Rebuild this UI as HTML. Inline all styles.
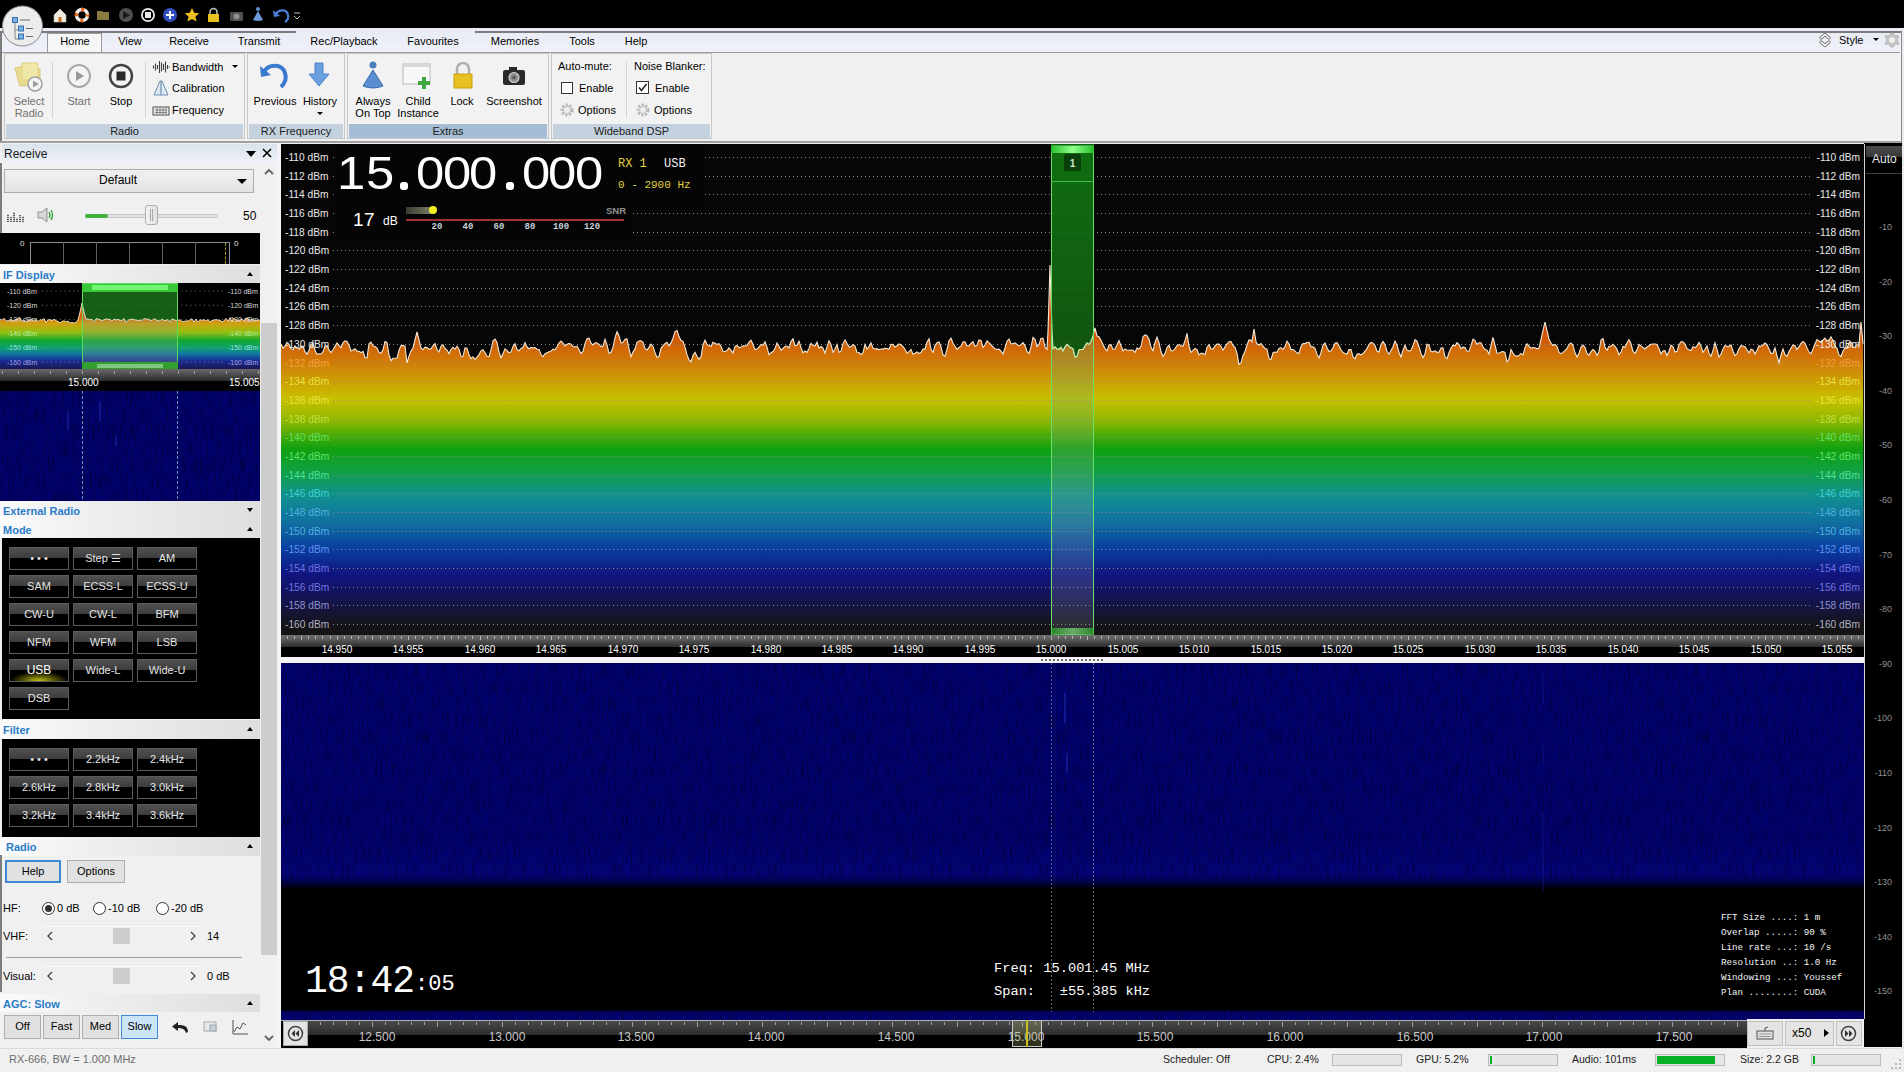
<!DOCTYPE html><html><head><meta charset="utf-8"><style>
*{margin:0;padding:0;box-sizing:border-box}
body{width:1904px;height:1072px;overflow:hidden;background:#f0f0f0;font-family:"Liberation Sans",sans-serif;font-size:12px;color:#000;position:relative}
.ab{position:absolute}
.t{position:absolute;white-space:nowrap;line-height:1}
.btn{position:absolute;background:linear-gradient(#505050,#3c3c3c 48%,#000 48%,#000);border:1px solid #5c5c5c;color:#e4e4e4;font-size:12px;text-align:center;line-height:20px}
.hdr{position:absolute;left:0;width:260px;background:linear-gradient(90deg,#fbfbfb,#f0f0f0 30%,#dedede);color:#2a78c0;font-weight:bold;font-size:12px}
.wbtn{position:absolute;background:#e1e1e1;border:1px solid #adadad;text-align:center;font-size:12px;line-height:20px}
</style></head><body>

<div class="ab" style="left:0;top:0;width:1904px;height:28px;background:#000"></div>
<div class="ab" style="left:0;top:28px;width:1904px;height:24px;background:linear-gradient(#e8eaf4,#f0f2fa)"></div>
<div class="ab" style="left:0;top:31px;width:296px;height:2px;background:#7c7c7c"></div>
<div class="ab" style="left:475px;top:31px;width:1429px;height:2px;background:#7c7c7c"></div>
<div class="ab" style="left:0;top:31px;width:2px;height:110px;background:#7c7c7c;z-index:5"></div>
<div class="ab" style="left:0;top:163px;width:2px;height:70px;background:#7c7c7c;z-index:5"></div>
<div class="ab" style="left:0;top:855px;width:2px;height:137px;background:#7c7c7c;z-index:5"></div>
<div class="ab" style="left:47px;top:33px;width:55px;height:21px;background:#f6f6f6;border:1px solid #9a9a9a;border-bottom:none"></div>
<div class="t" style="left:15px;width:120px;text-align:center;top:36px;font-size:11px">Home</div>
<div class="t" style="left:70px;width:120px;text-align:center;top:36px;font-size:11px">View</div>
<div class="t" style="left:129px;width:120px;text-align:center;top:36px;font-size:11px">Receive</div>
<div class="t" style="left:199px;width:120px;text-align:center;top:36px;font-size:11px">Transmit</div>
<div class="t" style="left:284px;width:120px;text-align:center;top:36px;font-size:11px">Rec/Playback</div>
<div class="t" style="left:373px;width:120px;text-align:center;top:36px;font-size:11px">Favourites</div>
<div class="t" style="left:455px;width:120px;text-align:center;top:36px;font-size:11px">Memories</div>
<div class="t" style="left:522px;width:120px;text-align:center;top:36px;font-size:11px">Tools</div>
<div class="t" style="left:576px;width:120px;text-align:center;top:36px;font-size:11px">Help</div>
<div class="ab" style="left:2px;top:52px;width:1898px;height:89px;background:#f0f0f0;border-top:1px solid #9a9a9a"></div>
<div class="ab" style="left:0;top:141px;width:1904px;height:2px;background:#a0a0a0"></div>
<div class="ab" style="left:4px;top:53px;width:241px;height:86px;border:1px solid #c8c8c8;background:#f2f2f2"></div>
<div class="ab" style="left:6px;top:124px;width:237px;height:14px;background:#c4d2e0"></div>
<div class="t" style="left:4px;width:241px;text-align:center;top:126px;font-size:11px;color:#202020">Radio</div>
<div class="ab" style="left:247px;top:53px;width:98px;height:86px;border:1px solid #c8c8c8;background:#f2f2f2"></div>
<div class="ab" style="left:249px;top:124px;width:94px;height:14px;background:#c4d2e0"></div>
<div class="t" style="left:247px;width:98px;text-align:center;top:126px;font-size:11px;color:#202020">RX Frequency</div>
<div class="ab" style="left:347px;top:53px;width:202px;height:86px;border:1px solid #c8c8c8;background:#f2f2f2"></div>
<div class="ab" style="left:349px;top:124px;width:198px;height:14px;background:#a6bdd6"></div>
<div class="t" style="left:347px;width:202px;text-align:center;top:126px;font-size:11px;color:#202020">Extras</div>
<div class="ab" style="left:551px;top:53px;width:161px;height:86px;border:1px solid #c8c8c8;background:#f2f2f2"></div>
<div class="ab" style="left:553px;top:124px;width:157px;height:14px;background:#c4d2e0"></div>
<div class="t" style="left:551px;width:161px;text-align:center;top:126px;font-size:11px;color:#202020">Wideband DSP</div>
<svg class="ab" style="left:12px;top:60px" width="34" height="34" viewBox="0 0 34 34">
<path d="M3 8 L14 6 L16 9 L28 9 L28 24 L8 26 Z" fill="#e8dc90" stroke="#d8c870" stroke-width="1"/>
<path d="M10 3 L26 3 L26 20 L10 20 Z" fill="#f0e8a8" stroke="#dcd080"/>
<circle cx="23" cy="24" r="7" fill="#f4f4f4" stroke="#a0a0a0" stroke-width="1.5"/>
<path d="M21 20.5 L27 24 L21 27.5 Z" fill="#a0a0a0"/></svg>
<div class="t" style="left:-1px;width:60px;text-align:center;top:96px;font-size:11px;color:#707070;">Select</div>
<div class="t" style="left:-1px;width:60px;text-align:center;top:108px;font-size:11px;color:#707070;">Radio</div>
<div class="ab" style="left:52px;top:62px;width:1px;height:56px;background:#d4d4d4"></div>
<svg class="ab" style="left:65px;top:62px" width="28" height="28" viewBox="0 0 28 28">
<circle cx="14" cy="14" r="11" fill="#f4f4f4" stroke="#a8a8a8" stroke-width="2"/>
<path d="M11 9 L19 14 L11 19 Z" fill="#9a9a9a"/></svg>
<div class="t" style="left:49px;width:60px;text-align:center;top:96px;font-size:11px;color:#707070;">Start</div>
<svg class="ab" style="left:107px;top:62px" width="28" height="28" viewBox="0 0 28 28">
<circle cx="14" cy="14" r="11" fill="#f4f4f4" stroke="#444" stroke-width="2.5"/>
<rect x="9.5" y="9.5" width="9" height="9" fill="#2a2a2a"/></svg>
<div class="t" style="left:91px;width:60px;text-align:center;top:96px;font-size:11px;color:#000;">Stop</div>
<div class="ab" style="left:145px;top:62px;width:1px;height:56px;background:#d4d4d4"></div>
<svg class="ab" style="left:152px;top:60px" width="18" height="14" viewBox="0 0 18 14">
<path d="M1.5 5.5v3M3.5 3.5v7M5.5 5v4M7.5 1v12M9.5 2.5v9M11.5 4v6M13.5 1.5v11M15.5 5v4M17 6.5v1" stroke="#404040" stroke-width="1.1"/></svg>
<div class="t" style="left:172px;top:62px;font-size:11px;color:#000;">Bandwidth</div>
<div class="ab" style="left:232px;top:65px;width:0;height:0;border-left:3px solid transparent;border-right:3px solid transparent;border-top:3px solid #000"></div>
<svg class="ab" style="left:152px;top:80px" width="18" height="16" viewBox="0 0 18 16">
<path d="M8 1 L2 15 L16 15 L10 1 Z" fill="#dce8f4" stroke="#7090b0" stroke-width="1"/><path d="M9 1 V15" stroke="#6080a0"/></svg>
<div class="t" style="left:172px;top:83px;font-size:11px;color:#000;">Calibration</div>
<svg class="ab" style="left:152px;top:104px" width="18" height="12" viewBox="0 0 18 12">
<rect x="1" y="3" width="16" height="8" fill="#e8e8e8" stroke="#505050"/><path d="M3 6h12M3 8.5h12M5 4v6M8 4v6M11 4v6M14 4v6" stroke="#707070" stroke-width="0.8"/></svg>
<div class="t" style="left:172px;top:105px;font-size:11px;color:#000;">Frequency</div>
<svg class="ab" style="left:258px;top:60px" width="32" height="30" viewBox="0 0 32 30">
<path d="M6 12 C10 4 24 3 27 13 C29 19 26 24 23 27" fill="none" stroke="#3a7ad0" stroke-width="4"/>
<path d="M2 6 L3 17 L13 15 Z" fill="#3a7ad0"/></svg>
<div class="t" style="left:245px;width:60px;text-align:center;top:96px;font-size:11px;color:#000;">Previous</div>
<svg class="ab" style="left:307px;top:62px" width="24" height="28" viewBox="0 0 24 28">
<path d="M8 1 H16 V12 H22 L12 24 L2 12 H8 Z" fill="#6aa0e0" stroke="#4a80c8" stroke-width="1"/></svg>
<div class="t" style="left:290px;width:60px;text-align:center;top:96px;font-size:11px;color:#000;">History</div>
<div class="ab" style="left:317px;top:112px;width:0;height:0;border-left:3px solid transparent;border-right:3px solid transparent;border-top:3px solid #000"></div>
<svg class="ab" style="left:358px;top:61px" width="30" height="30" viewBox="0 0 30 30">
<circle cx="15" cy="4" r="3.5" fill="#4a80c0"/>
<path d="M15 9 L25 25 Q15 29 5 25 Z" fill="#5a8ed0" stroke="#3a6aa8" stroke-width="1"/></svg>
<div class="t" style="left:343px;width:60px;text-align:center;top:96px;font-size:11px;color:#000;">Always</div>
<div class="t" style="left:343px;width:60px;text-align:center;top:108px;font-size:11px;color:#000;">On Top</div>
<svg class="ab" style="left:402px;top:63px" width="32" height="28" viewBox="0 0 32 28">
<rect x="1" y="1" width="27" height="20" fill="#f8f8f8" stroke="#b8b8b8"/><rect x="1" y="1" width="27" height="3" fill="#d8d8d8"/>
<path d="M22 14 V26 M16 20 H28" stroke="#40a840" stroke-width="4"/></svg>
<div class="t" style="left:388px;width:60px;text-align:center;top:96px;font-size:11px;color:#000;">Child</div>
<div class="t" style="left:388px;width:60px;text-align:center;top:108px;font-size:11px;color:#000;">Instance</div>
<svg class="ab" style="left:451px;top:62px" width="24" height="28" viewBox="0 0 24 28">
<path d="M6 12 V7 A6 6 0 0 1 18 7 V12" fill="none" stroke="#b0b0b0" stroke-width="2.5"/>
<rect x="3" y="12" width="18" height="14" fill="#e8c020" stroke="#c8a010"/></svg>
<div class="t" style="left:432px;width:60px;text-align:center;top:96px;font-size:11px;color:#000;">Lock</div>
<svg class="ab" style="left:501px;top:65px" width="26" height="22" viewBox="0 0 26 22">
<rect x="2" y="5" width="22" height="15" rx="2" fill="#2a2a2a"/><rect x="8" y="2" width="8" height="4" fill="#2a2a2a"/>
<circle cx="13" cy="12.5" r="5" fill="#909090" stroke="#d0d0d0" stroke-width="1.2"/><circle cx="13" cy="12.5" r="2" fill="#606060"/></svg>
<div class="t" style="left:474px;width:80px;text-align:center;top:96px;font-size:11px;color:#000;">Screenshot</div>
<div class="t" style="left:558px;top:61px;font-size:11px;color:#000;">Auto-mute:</div>
<div class="ab" style="left:561px;top:82px;width:12px;height:12px;border:1px solid #333;background:#fff"></div>
<div class="t" style="left:579px;top:83px;font-size:11px;color:#000;">Enable</div>
<svg class="ab" style="left:559px;top:102px" width="16" height="16" viewBox="0 0 16 16">
<circle cx="8" cy="8" r="5" fill="none" stroke="#b8b8b8" stroke-width="3" stroke-dasharray="2.2 1.4"/><circle cx="8" cy="8" r="3.5" fill="#f0f0f0" stroke="#c0c0c0"/></svg>
<div class="t" style="left:578px;top:105px;font-size:11px;color:#000;">Options</div>
<div class="ab" style="left:626px;top:62px;width:1px;height:56px;background:#d4d4d4"></div>
<div class="t" style="left:634px;top:61px;font-size:11px;color:#000;">Noise Blanker:</div>
<svg class="ab" style="left:636px;top:81px" width="14" height="14" viewBox="0 0 14 14">
<rect x="0.5" y="0.5" width="12" height="12" fill="#fff" stroke="#333"/><path d="M3 6.5 L5.5 9.5 L10.5 3" fill="none" stroke="#222" stroke-width="1.5"/></svg>
<div class="t" style="left:655px;top:83px;font-size:11px;color:#000;">Enable</div>
<svg class="ab" style="left:635px;top:102px" width="16" height="16" viewBox="0 0 16 16">
<circle cx="8" cy="8" r="5" fill="none" stroke="#b8b8b8" stroke-width="3" stroke-dasharray="2.2 1.4"/><circle cx="8" cy="8" r="3.5" fill="#f0f0f0" stroke="#c0c0c0"/></svg>
<div class="t" style="left:654px;top:105px;font-size:11px;color:#000;">Options</div>
<svg class="ab" style="left:1818px;top:32px" width="14" height="16" viewBox="0 0 14 16">
<path d="M3 6 L7 2.5 L11 6 M3 10 L7 13.5 L11 10" fill="none" stroke="#707070" stroke-width="3.2" stroke-linecap="round" stroke-linejoin="round"/>
<path d="M3 6 L7 2.5 L11 6 M3 10 L7 13.5 L11 10" fill="none" stroke="#fff" stroke-width="1.6" stroke-linecap="round" stroke-linejoin="round"/></svg>
<div class="t" style="left:1839px;top:35px;font-size:11px;color:#000;">Style</div>
<div class="ab" style="left:1873px;top:38px;width:0;height:0;border-left:3px solid transparent;border-right:3px solid transparent;border-top:3px solid #000"></div>
<svg class="ab" style="left:1884px;top:32px" width="16" height="16" viewBox="0 0 16 16">
<path d="M6.5 1 H9.5 L10 3 L12 4 L13.8 3 L15 5.5 L13.5 7 V9 L15 10.5 L13.8 13 L12 12 L10 13 L9.5 15 H6.5 L6 13 L4 12 L2.2 13 L1 10.5 L2.5 9 V7 L1 5.5 L2.2 3 L4 4 L6 3 Z" fill="#c4c4c4" stroke="#a8a8a8" stroke-width="0.6"/>
<circle cx="8" cy="8" r="3" fill="#eeeeee"/></svg>
<div class="ab" style="left:1901px;top:31px;width:1px;height:112px;background:#8a8a8a;z-index:4"></div>
<div class="ab" style="left:1902px;top:28px;width:2px;height:1044px;background:#ececec;z-index:4"></div>
<svg class="ab" style="left:0;top:4px" width="46" height="44" viewBox="0 0 46 44">
<circle cx="22.5" cy="22" r="20" fill="#ececec" stroke="#8a8a8a" stroke-width="1"/>
<path d="M15 17 V35 H20 M15 26 H20" fill="none" stroke="#707070" stroke-width="0.8"/>
<rect x="12.5" y="13.5" width="5" height="5" fill="#7ab0e0" stroke="#3a70b0"/>
<rect x="18.5" y="22" width="5" height="5" fill="#7ab0e0" stroke="#3a70b0"/>
<rect x="18.5" y="30" width="5" height="5" fill="#7ab0e0" stroke="#3a70b0"/>
<path d="M20 16 H30 M26 24.5 H33 M26 32.5 H33" stroke="#505050" stroke-width="0.8"/></svg>
<svg class="ab" style="left:52px;top:6px" width="260" height="18" viewBox="0 0 260 18">
<path d="M2 9 L8 3 L14 9 V16 H2 Z" fill="#f0ece0" stroke="#d0c8b0" stroke-width="0.6"/><rect x="6.5" y="11" width="3" height="5" fill="#c87020"/>
<circle cx="30" cy="9" r="5.5" fill="none" stroke="#f4f0ec" stroke-width="3.5"/><circle cx="30" cy="9" r="5.5" fill="none" stroke="#e86a20" stroke-width="3.5" stroke-dasharray="3.2 5.44" stroke-dashoffset="1.6"/>
<path d="M45 5 H50 L51 6 H57 V14 H45 Z" fill="#8a7a40"/>
<circle cx="74" cy="9" r="7" fill="#505050"/><path d="M71 5 L78 9 L71 13 Z" fill="#1a1a1a"/>
<circle cx="96" cy="9" r="7" fill="#e8e8e8"/><circle cx="96" cy="9" r="5.2" fill="#000"/><rect x="93" y="6" width="6" height="6" fill="#e8e8e8"/>
<circle cx="118" cy="9" r="7" fill="#3050c0"/><path d="M118 5 V13 M114 9 H122" stroke="#fff" stroke-width="2"/>
<path d="M140 2 L142.2 6.8 L147.3 7.2 L143.4 10.5 L144.6 15.6 L140 12.9 L135.4 15.6 L136.6 10.5 L132.7 7.2 L137.8 6.8 Z" fill="#f0c020"/>
<path d="M158 8 V6 A3.5 3.5 0 0 1 165 6 V8" fill="none" stroke="#c0c0c0" stroke-width="1.5"/><rect x="156" y="8" width="11" height="8" fill="#e8c020"/>
<rect x="178" y="6" width="13" height="9" rx="1" fill="#505050"/><circle cx="184.5" cy="10.5" r="3" fill="#909090"/>
<circle cx="206" cy="3" r="2" fill="#6090c8"/><path d="M206 5 L211 14 Q206 16 201 14 Z" fill="#6a9ad8"/>
<path d="M224 8 C227 3 235 3 236 9 C237 12 235 15 233 16" fill="none" stroke="#4a80d8" stroke-width="2.2"/><path d="M221 4 L222 11 L228 10 Z" fill="#4a80d8"/>
<path d="M242 10 L245 13 L248 10 M242 7 H248" fill="none" stroke="#c0c0c0" stroke-width="1"/>
</svg>
<div class="ab" style="left:0px;top:143px;width:281px;height:905px;background:#f0f0f0"></div>
<div class="ab" style="left:2px;top:144px;width:275px;height:19px;background:linear-gradient(#dae2ec,#eef2f7)"></div>
<div class="t" style="left:4px;top:148px;font-size:12px;color:#1a1a1a;">Receive</div>
<div class="ab" style="left:246px;top:151px;width:0;height:0;border-left:5px solid transparent;border-right:5px solid transparent;border-top:6px solid #000"></div>
<svg class="ab" style="left:262px;top:148px" width="10" height="10" viewBox="0 0 10 10"><path d="M1 1 L9 9 M9 1 L1 9" stroke="#000" stroke-width="1.6"/></svg>
<div class="ab" style="left:261px;top:163px;width:16px;height:884px;background:#f0f0f0"></div>
<div class="ab" style="left:277px;top:143px;width:4px;height:905px;background:#f4f4f8"></div>
<div class="ab" style="left:261px;top:323px;width:16px;height:632px;background:#cdcdcd"></div>
<svg class="ab" style="left:263px;top:168px" width="12" height="8" viewBox="0 0 12 8"><path d="M2 6 L6 2 L10 6" fill="none" stroke="#606060" stroke-width="1.8"/></svg>
<svg class="ab" style="left:263px;top:1034px" width="12" height="8" viewBox="0 0 12 8"><path d="M2 2 L6 6 L10 2" fill="none" stroke="#606060" stroke-width="1.8"/></svg>
<div class="ab" style="left:4px;top:169px;width:250px;height:24px;border:1px solid #acacac;background:linear-gradient(#f0f0f0,#e4e4e4)"></div>
<div class="t" style="left:68px;width:100px;text-align:center;top:174px;font-size:12px;color:#000;">Default</div>
<div class="ab" style="left:237px;top:179px;width:0;height:0;border-left:5px solid transparent;border-right:5px solid transparent;border-top:5px solid #000"></div>
<svg class="ab" style="left:7px;top:209px" width="18" height="14" viewBox="0 0 18 14">
<path d="M1 13 V5 M4 13 V8 M7 13 V3 M10 13 V9 M13 13 V6 M16 13 V7" stroke="#606060" stroke-width="2" stroke-dasharray="1.2 0.8"/></svg>
<svg class="ab" style="left:36px;top:206px" width="20" height="18" viewBox="0 0 20 18">
<path d="M2 6 H6 L11 2 V16 L6 12 H2 Z" fill="#d8d8d8" stroke="#909090"/><path d="M13 6 Q15 9 13 12 M15 4 Q18 9 15 14" fill="none" stroke="#30a030" stroke-width="1.3"/></svg>
<div class="ab" style="left:85px;top:214px;width:133px;height:4px;border-radius:2px;background:#e0e0e0;border:1px solid #c8c8c8"></div>
<div class="ab" style="left:85px;top:214px;width:23px;height:4px;border-radius:2px;background:#40b040"></div>
<div class="ab" style="left:145px;top:205px;width:13px;height:20px;border-radius:3px;border:1px solid #b0b0b0;background:linear-gradient(90deg,#f4f4f4,#e0e0e0)"></div>
<div class="ab" style="left:150px;top:209px;width:1px;height:12px;background:#a8a8a8"></div><div class="ab" style="left:152px;top:209px;width:1px;height:12px;background:#a8a8a8"></div>
<div class="t" style="left:243px;top:210px;font-size:12px;color:#000;">50</div>
<div class="ab" style="left:0px;top:233px;width:260px;height:31px;background:#000"></div>
<div class="t" style="left:20px;top:240px;font-size:8px;color:#e0e0e0;">0</div>
<div class="t" style="left:234px;top:240px;font-size:8px;color:#e0e0e0;">0</div>
<div class="ab" style="left:30px;top:242px;width:200px;height:22px;border:1px solid #909090;border-bottom:none"></div>
<div class="ab" style="left:63px;top:242px;width:1px;height:22px;background:#606060"></div>
<div class="ab" style="left:96px;top:242px;width:1px;height:22px;background:#606060"></div>
<div class="ab" style="left:129px;top:242px;width:1px;height:22px;background:#606060"></div>
<div class="ab" style="left:162px;top:242px;width:1px;height:22px;background:#606060"></div>
<div class="ab" style="left:195px;top:242px;width:1px;height:22px;background:#606060"></div>
<div class="ab" style="left:225px;top:243px;width:1px;height:21px;border-left:1px dashed #a09020"></div>
<div class="hdr" style="top:265px;height:18px;left:0px;width:260px"></div>
<div class="t" style="left:3px;top:270px;font-size:11px;color:#2a7cc8;font-weight:bold">IF Display</div>
<div class="ab" style="left:247px;top:272px;width:0;height:0;border-left:3px solid transparent;border-right:3px solid transparent;border-bottom:4px solid #000"></div>
<svg class="ab" style="left:0px;top:283px" width="260" height="86" viewBox="0 0 260 86">
<defs><linearGradient id="gif" gradientUnits="userSpaceOnUse" x1="0" y1="34" x2="0" y2="86"><stop offset="0" stop-color="#d86010"/><stop offset="0.12" stop-color="#d0a010"/><stop offset="0.3" stop-color="#90c010"/><stop offset="0.45" stop-color="#10a830"/><stop offset="0.6" stop-color="#10a070"/><stop offset="0.72" stop-color="#1070a0"/><stop offset="0.85" stop-color="#1a2890"/><stop offset="1" stop-color="#1a1a50"/></linearGradient>
<clipPath id="ifc"><rect x="82" y="0" width="96" height="86"/></clipPath></defs>
<rect width="260" height="86" fill="#000"/>
<path d="M0 86 L0 36.2 L2 37.2 L4 35.3 L6 37.7 L8 38.1 L10 36.5 L12 37.4 L14 37.3 L16 36.6 L18 36.1 L20 35.0 L22 38.4 L24 37.0 L26 39.5 L28 37.8 L30 37.3 L32 36.3 L34 38.4 L36 36.5 L38 38.6 L40 36.6 L42 37.2 L44 35.5 L46 39.3 L48 36.9 L50 36.6 L52 37.8 L54 36.1 L56 37.8 L58 38.3 L60 40.0 L62 38.5 L64 37.7 L66 38.9 L68 38.0 L70 40.1 L72 39.5 L74 40.0 L76 39.6 L78 36.6 L80 29.0 L82 20.0 L84 29.0 L86 36.2 L88 36.0 L90 36.8 L92 36.3 L94 38.9 L96 35.8 L98 35.9 L100 36.7 L102 37.7 L104 36.7 L106 36.0 L108 36.2 L110 36.6 L112 38.0 L114 36.0 L116 36.9 L118 36.4 L120 37.3 L122 37.4 L124 35.5 L126 39.4 L128 37.2 L130 36.5 L132 36.1 L134 36.7 L136 37.0 L138 37.6 L140 37.0 L142 37.5 L144 35.4 L146 36.2 L148 36.0 L150 37.2 L152 37.5 L154 35.5 L156 36.8 L158 37.7 L160 37.9 L162 35.9 L164 37.6 L166 37.3 L168 36.6 L170 39.0 L172 35.9 L174 36.7 L176 37.5 L178 37.2 L180 36.8 L182 38.4 L184 38.4 L186 37.9 L188 38.0 L190 36.9 L192 35.8 L194 39.2 L196 36.0 L198 39.2 L200 36.9 L202 37.2 L204 36.8 L206 38.0 L208 36.5 L210 38.8 L212 37.5 L214 37.2 L216 36.4 L218 37.3 L220 37.0 L222 38.9 L224 37.9 L226 35.4 L228 38.5 L230 34.6 L232 38.5 L234 35.1 L236 37.0 L238 37.8 L240 37.0 L242 35.9 L244 38.2 L246 35.2 L248 35.5 L250 38.4 L252 36.1 L254 37.2 L256 37.8 L258 36.9 L260 37.3 L260 86 Z" fill="url(#gif)"/>

<path d="M42 8.0 H224" stroke="#909090" stroke-width="0.8" stroke-dasharray="1 3.5"/>
<text x="7" y="10.5" font-size="7" fill="#d8d8d8" font-family="Liberation Sans">-110 dBm</text>
<text x="228" y="10.5" font-size="7" fill="#d8d8d8" font-family="Liberation Sans">-110 dBm</text>
<path d="M42 22.2 H224" stroke="#909090" stroke-width="0.8" stroke-dasharray="1 3.5"/>
<text x="7" y="24.7" font-size="7" fill="#d8d8d8" font-family="Liberation Sans">-120 dBm</text>
<text x="228" y="24.7" font-size="7" fill="#d8d8d8" font-family="Liberation Sans">-120 dBm</text>
<path d="M42 36.4 H224" stroke="#909090" stroke-width="0.8" stroke-dasharray="1 3.5"/>
<text x="7" y="38.9" font-size="7" fill="#d8d8d8" font-family="Liberation Sans">-130 dBm</text>
<text x="228" y="38.9" font-size="7" fill="#d8d8d8" font-family="Liberation Sans">-130 dBm</text>
<path d="M42 50.6 H224" stroke="#909090" stroke-width="0.8" stroke-dasharray="1 3.5"/>
<text x="7" y="53.1" font-size="7" fill="#b0f0a0" font-family="Liberation Sans">-140 dBm</text>
<text x="228" y="53.1" font-size="7" fill="#b0f0a0" font-family="Liberation Sans">-140 dBm</text>
<path d="M42 64.8 H224" stroke="#909090" stroke-width="0.8" stroke-dasharray="1 3.5"/>
<text x="7" y="67.3" font-size="7" fill="#90e0e0" font-family="Liberation Sans">-150 dBm</text>
<text x="228" y="67.3" font-size="7" fill="#90e0e0" font-family="Liberation Sans">-150 dBm</text>
<path d="M42 79.0 H224" stroke="#909090" stroke-width="0.8" stroke-dasharray="1 3.5"/>
<text x="7" y="81.5" font-size="7" fill="#a0a0e0" font-family="Liberation Sans">-160 dBm</text>
<text x="228" y="81.5" font-size="7" fill="#a0a0e0" font-family="Liberation Sans">-160 dBm</text>
<rect x="82" y="0" width="96" height="86" fill="rgba(130,150,130,0.25)"/>
<path d="M0 0 L0 36.2 L2 37.2 L4 35.3 L6 37.7 L8 38.1 L10 36.5 L12 37.4 L14 37.3 L16 36.6 L18 36.1 L20 35.0 L22 38.4 L24 37.0 L26 39.5 L28 37.8 L30 37.3 L32 36.3 L34 38.4 L36 36.5 L38 38.6 L40 36.6 L42 37.2 L44 35.5 L46 39.3 L48 36.9 L50 36.6 L52 37.8 L54 36.1 L56 37.8 L58 38.3 L60 40.0 L62 38.5 L64 37.7 L66 38.9 L68 38.0 L70 40.1 L72 39.5 L74 40.0 L76 39.6 L78 36.6 L80 29.0 L82 20.0 L84 29.0 L86 36.2 L88 36.0 L90 36.8 L92 36.3 L94 38.9 L96 35.8 L98 35.9 L100 36.7 L102 37.7 L104 36.7 L106 36.0 L108 36.2 L110 36.6 L112 38.0 L114 36.0 L116 36.9 L118 36.4 L120 37.3 L122 37.4 L124 35.5 L126 39.4 L128 37.2 L130 36.5 L132 36.1 L134 36.7 L136 37.0 L138 37.6 L140 37.0 L142 37.5 L144 35.4 L146 36.2 L148 36.0 L150 37.2 L152 37.5 L154 35.5 L156 36.8 L158 37.7 L160 37.9 L162 35.9 L164 37.6 L166 37.3 L168 36.6 L170 39.0 L172 35.9 L174 36.7 L176 37.5 L178 37.2 L180 36.8 L182 38.4 L184 38.4 L186 37.9 L188 38.0 L190 36.9 L192 35.8 L194 39.2 L196 36.0 L198 39.2 L200 36.9 L202 37.2 L204 36.8 L206 38.0 L208 36.5 L210 38.8 L212 37.5 L214 37.2 L216 36.4 L218 37.3 L220 37.0 L222 38.9 L224 37.9 L226 35.4 L228 38.5 L230 34.6 L232 38.5 L234 35.1 L236 37.0 L238 37.8 L240 37.0 L242 35.9 L244 38.2 L246 35.2 L248 35.5 L250 38.4 L252 36.1 L254 37.2 L256 37.8 L258 36.9 L260 37.3 L260 0 Z" fill="rgba(20,120,20,0.7)" clip-path="url(#ifc)"/>
<path d="M0 36.2 L2 37.2 L4 35.3 L6 37.7 L8 38.1 L10 36.5 L12 37.4 L14 37.3 L16 36.6 L18 36.1 L20 35.0 L22 38.4 L24 37.0 L26 39.5 L28 37.8 L30 37.3 L32 36.3 L34 38.4 L36 36.5 L38 38.6 L40 36.6 L42 37.2 L44 35.5 L46 39.3 L48 36.9 L50 36.6 L52 37.8 L54 36.1 L56 37.8 L58 38.3 L60 40.0 L62 38.5 L64 37.7 L66 38.9 L68 38.0 L70 40.1 L72 39.5 L74 40.0 L76 39.6 L78 36.6 L80 29.0 L82 20.0 L84 29.0 L86 36.2 L88 36.0 L90 36.8 L92 36.3 L94 38.9 L96 35.8 L98 35.9 L100 36.7 L102 37.7 L104 36.7 L106 36.0 L108 36.2 L110 36.6 L112 38.0 L114 36.0 L116 36.9 L118 36.4 L120 37.3 L122 37.4 L124 35.5 L126 39.4 L128 37.2 L130 36.5 L132 36.1 L134 36.7 L136 37.0 L138 37.6 L140 37.0 L142 37.5 L144 35.4 L146 36.2 L148 36.0 L150 37.2 L152 37.5 L154 35.5 L156 36.8 L158 37.7 L160 37.9 L162 35.9 L164 37.6 L166 37.3 L168 36.6 L170 39.0 L172 35.9 L174 36.7 L176 37.5 L178 37.2 L180 36.8 L182 38.4 L184 38.4 L186 37.9 L188 38.0 L190 36.9 L192 35.8 L194 39.2 L196 36.0 L198 39.2 L200 36.9 L202 37.2 L204 36.8 L206 38.0 L208 36.5 L210 38.8 L212 37.5 L214 37.2 L216 36.4 L218 37.3 L220 37.0 L222 38.9 L224 37.9 L226 35.4 L228 38.5 L230 34.6 L232 38.5 L234 35.1 L236 37.0 L238 37.8 L240 37.0 L242 35.9 L244 38.2 L246 35.2 L248 35.5 L250 38.4 L252 36.1 L254 37.2 L256 37.8 L258 36.9 L260 37.3" fill="none" stroke="#f0e8d0" stroke-width="0.9"/>
<rect x="82.5" y="0.5" width="95" height="85" fill="none" stroke="#60d860" stroke-width="1"/>
<rect x="82" y="1" width="96" height="8" fill="#38c838"/><rect x="92" y="2" width="76" height="5" fill="#80ff80" opacity="0.8"/>
<rect x="82" y="79" width="96" height="7" fill="#30a030"/><rect x="97" y="81" width="66" height="4" fill="#b0e0b0" opacity="0.6"/>
</svg>
<div class="ab" style="left:0px;top:369px;width:260px;height:12px;background:linear-gradient(#6a6a6a,#2a2a2a)"></div>
<div class="ab" style="left:2px;top:371px;width:1px;height:3px;background:#a0a0a0"></div>
<div class="ab" style="left:18px;top:371px;width:1px;height:3px;background:#a0a0a0"></div>
<div class="ab" style="left:34px;top:371px;width:1px;height:3px;background:#a0a0a0"></div>
<div class="ab" style="left:50px;top:371px;width:1px;height:3px;background:#a0a0a0"></div>
<div class="ab" style="left:66px;top:371px;width:1px;height:3px;background:#a0a0a0"></div>
<div class="ab" style="left:82px;top:371px;width:1px;height:3px;background:#a0a0a0"></div>
<div class="ab" style="left:98px;top:371px;width:1px;height:3px;background:#a0a0a0"></div>
<div class="ab" style="left:114px;top:371px;width:1px;height:3px;background:#a0a0a0"></div>
<div class="ab" style="left:130px;top:371px;width:1px;height:3px;background:#a0a0a0"></div>
<div class="ab" style="left:146px;top:371px;width:1px;height:3px;background:#a0a0a0"></div>
<div class="ab" style="left:162px;top:371px;width:1px;height:3px;background:#a0a0a0"></div>
<div class="ab" style="left:178px;top:371px;width:1px;height:3px;background:#a0a0a0"></div>
<div class="ab" style="left:194px;top:371px;width:1px;height:3px;background:#a0a0a0"></div>
<div class="ab" style="left:210px;top:371px;width:1px;height:3px;background:#a0a0a0"></div>
<div class="ab" style="left:226px;top:371px;width:1px;height:3px;background:#a0a0a0"></div>
<div class="ab" style="left:242px;top:371px;width:1px;height:3px;background:#a0a0a0"></div>
<div class="ab" style="left:258px;top:371px;width:1px;height:3px;background:#a0a0a0"></div>
<div class="ab" style="left:0px;top:381px;width:260px;height:10px;background:#000"></div>
<div class="t" style="left:68px;top:378px;font-size:10px;color:#fff;">15.000</div>
<div class="t" style="left:229px;top:378px;font-size:10px;color:#fff;">15.005</div>
<svg class="ab" style="left:0px;top:391px" width="260" height="110" viewBox="0 0 260 110">
<defs><filter id="wfn2" x="0" y="0" width="100%" height="100%" color-interpolation-filters="sRGB">
<feTurbulence type="fractalNoise" baseFrequency="0.6 0.06" numOctaves="2" seed="2"/>
<feColorMatrix type="matrix" values="0 0 0 0 0  0 0 0 0 0  0 0 0 0 0.12  0 0 0 2.0 -0.85"/></filter></defs>
<rect width="260" height="110" fill="#02026c"/>
<rect width="260" height="110" filter="url(#wfn2)" opacity="0.6"/>
<path d="M68 20 V40 M100 10 V30 M116 45 V55" stroke="#2a3ad0" stroke-width="1" opacity="0.7"/>
<path d="M82.5 0 V110 M177.5 0 V110" stroke="#6a90c0" stroke-width="1" stroke-dasharray="3 2"/>
</svg>
<div class="hdr" style="top:501px;height:19px;left:0px;width:260px"></div>
<div class="t" style="left:3px;top:506px;font-size:11px;color:#2a7cc8;font-weight:bold">External Radio</div>
<div class="ab" style="left:247px;top:508px;width:0;height:0;border-left:3px solid transparent;border-right:3px solid transparent;border-top:4px solid #000"></div>
<div class="hdr" style="top:520px;height:18px;left:0px;width:260px"></div>
<div class="t" style="left:3px;top:525px;font-size:11px;color:#2a7cc8;font-weight:bold">Mode</div>
<div class="ab" style="left:247px;top:527px;width:0;height:0;border-left:3px solid transparent;border-right:3px solid transparent;border-bottom:4px solid #000"></div>
<div class="ab" style="left:2px;top:538px;width:258px;height:181px;background:#000"></div>
<div class="btn" style="left:9px;top:547px;width:60px;height:23px;line-height:21px;font-size:11px">&bull; &bull; &bull;</div>
<div class="btn" style="left:73px;top:547px;width:60px;height:23px;line-height:21px;font-size:11px">Step &#9776;</div>
<div class="btn" style="left:137px;top:547px;width:60px;height:23px;line-height:21px;font-size:11px">AM</div>
<div class="btn" style="left:9px;top:575px;width:60px;height:23px;line-height:21px;font-size:11px">SAM</div>
<div class="btn" style="left:73px;top:575px;width:60px;height:23px;line-height:21px;font-size:11px">ECSS-L</div>
<div class="btn" style="left:137px;top:575px;width:60px;height:23px;line-height:21px;font-size:11px">ECSS-U</div>
<div class="btn" style="left:9px;top:603px;width:60px;height:23px;line-height:21px;font-size:11px">CW-U</div>
<div class="btn" style="left:73px;top:603px;width:60px;height:23px;line-height:21px;font-size:11px">CW-L</div>
<div class="btn" style="left:137px;top:603px;width:60px;height:23px;line-height:21px;font-size:11px">BFM</div>
<div class="btn" style="left:9px;top:631px;width:60px;height:23px;line-height:21px;font-size:11px">NFM</div>
<div class="btn" style="left:73px;top:631px;width:60px;height:23px;line-height:21px;font-size:11px">WFM</div>
<div class="btn" style="left:137px;top:631px;width:60px;height:23px;line-height:21px;font-size:11px">LSB</div>
<div class="btn" style="left:9px;top:659px;width:60px;height:23px;background:radial-gradient(ellipse 50% 45% at 50% 100%,#c4c418 0%,rgba(150,150,10,0.55) 55%,transparent 100%),linear-gradient(#505050,#3c3c3c 48%,#000 48%,#000);color:#fff;line-height:21px;font-size:12px">USB</div>
<div class="btn" style="left:73px;top:659px;width:60px;height:23px;line-height:21px;font-size:11px">Wide-L</div>
<div class="btn" style="left:137px;top:659px;width:60px;height:23px;line-height:21px;font-size:11px">Wide-U</div>
<div class="btn" style="left:9px;top:687px;width:60px;height:23px;line-height:21px;font-size:11px">DSB</div>
<div class="hdr" style="top:720px;height:19px;left:0px;width:260px"></div>
<div class="t" style="left:3px;top:725px;font-size:11px;color:#2a7cc8;font-weight:bold">Filter</div>
<div class="ab" style="left:247px;top:727px;width:0;height:0;border-left:3px solid transparent;border-right:3px solid transparent;border-bottom:4px solid #000"></div>
<div class="ab" style="left:2px;top:739px;width:258px;height:98px;background:#000"></div>
<div class="btn" style="left:9px;top:748px;width:60px;height:23px;line-height:21px;font-size:11px">&bull; &bull; &bull;</div>
<div class="btn" style="left:73px;top:748px;width:60px;height:23px;line-height:21px;font-size:11px">2.2kHz</div>
<div class="btn" style="left:137px;top:748px;width:60px;height:23px;line-height:21px;font-size:11px">2.4kHz</div>
<div class="btn" style="left:9px;top:776px;width:60px;height:23px;line-height:21px;font-size:11px">2.6kHz</div>
<div class="btn" style="left:73px;top:776px;width:60px;height:23px;line-height:21px;font-size:11px">2.8kHz</div>
<div class="btn" style="left:137px;top:776px;width:60px;height:23px;line-height:21px;font-size:11px">3.0kHz</div>
<div class="btn" style="left:9px;top:804px;width:60px;height:23px;line-height:21px;font-size:11px">3.2kHz</div>
<div class="btn" style="left:73px;top:804px;width:60px;height:23px;line-height:21px;font-size:11px">3.4kHz</div>
<div class="btn" style="left:137px;top:804px;width:60px;height:23px;line-height:21px;font-size:11px">3.6kHz</div>
<div class="hdr" style="top:837px;height:19px;left:0px;width:260px"></div>
<div class="t" style="left:6px;top:842px;font-size:11px;color:#2a7cc8;font-weight:bold">Radio</div>
<div class="ab" style="left:247px;top:844px;width:0;height:0;border-left:3px solid transparent;border-right:3px solid transparent;border-bottom:4px solid #000"></div>
<div class="ab" style="left:5px;top:860px;width:56px;height:23px;background:#e1e1e1;border:2px solid #3c8ad8"></div>
<div class="t" style="left:5px;width:56px;text-align:center;top:866px;font-size:11px;color:#000;">Help</div>
<div class="ab" style="left:67px;top:860px;width:58px;height:23px;background:#e1e1e1;border:1px solid #adadad"></div>
<div class="t" style="left:67px;width:58px;text-align:center;top:866px;font-size:11px;color:#000;">Options</div>
<div class="t" style="left:3px;top:903px;font-size:11px;color:#000;">HF:</div>
<div class="ab" style="left:42px;top:902px;width:13px;height:13px;border-radius:50%;border:1px solid #333;background:#fff"></div>
<div class="ab" style="left:45px;top:905px;width:7px;height:7px;border-radius:50%;background:#333"></div>
<div class="t" style="left:57px;top:903px;font-size:11px;color:#000;">0 dB</div>
<div class="ab" style="left:93px;top:902px;width:13px;height:13px;border-radius:50%;border:1px solid #333;background:#fff"></div>
<div class="t" style="left:108px;top:903px;font-size:11px;color:#000;">-10 dB</div>
<div class="ab" style="left:156px;top:902px;width:13px;height:13px;border-radius:50%;border:1px solid #333;background:#fff"></div>
<div class="t" style="left:171px;top:903px;font-size:11px;color:#000;">-20 dB</div>
<div class="t" style="left:3px;top:931px;font-size:11px;color:#000;">VHF:</div>
<div class="ab" style="left:42px;top:926px;width:160px;height:1px;background:#fafafa"></div>
<svg class="ab" style="left:46px;top:931px" width="8" height="10" viewBox="0 0 8 10"><path d="M6 1 L2 5 L6 9" fill="none" stroke="#404040" stroke-width="1.3"/></svg>
<svg class="ab" style="left:189px;top:931px" width="8" height="10" viewBox="0 0 8 10"><path d="M2 1 L6 5 L2 9" fill="none" stroke="#404040" stroke-width="1.3"/></svg>
<div class="ab" style="left:113px;top:928px;width:17px;height:16px;background:#cdcdcd"></div>
<div class="t" style="left:207px;top:931px;font-size:11px;color:#000;">14</div>
<div class="t" style="left:3px;top:971px;font-size:11px;color:#000;">Visual:</div>
<div class="ab" style="left:42px;top:966px;width:160px;height:1px;background:#fafafa"></div>
<svg class="ab" style="left:46px;top:971px" width="8" height="10" viewBox="0 0 8 10"><path d="M6 1 L2 5 L6 9" fill="none" stroke="#404040" stroke-width="1.3"/></svg>
<svg class="ab" style="left:189px;top:971px" width="8" height="10" viewBox="0 0 8 10"><path d="M2 1 L6 5 L2 9" fill="none" stroke="#404040" stroke-width="1.3"/></svg>
<div class="ab" style="left:113px;top:968px;width:17px;height:16px;background:#cdcdcd"></div>
<div class="t" style="left:207px;top:971px;font-size:11px;color:#000;">0 dB</div>
<div class="ab" style="left:6px;top:957px;width:236px;height:1px;background:#a0a0a0"></div>
<div class="hdr" style="top:994px;height:18px;left:0px;width:260px"></div>
<div class="t" style="left:3px;top:999px;font-size:11px;color:#2a7cc8;font-weight:bold">AGC: Slow</div>
<div class="ab" style="left:247px;top:1001px;width:0;height:0;border-left:3px solid transparent;border-right:3px solid transparent;border-bottom:4px solid #000"></div>
<div class="ab" style="left:4px;top:1015px;width:37px;height:24px;background:#e1e1e1;border:1px solid #adadad"></div>
<div class="t" style="left:4px;width:37px;text-align:center;top:1021px;font-size:11px;color:#000;">Off</div>
<div class="ab" style="left:43px;top:1015px;width:37px;height:24px;background:#e1e1e1;border:1px solid #adadad"></div>
<div class="t" style="left:43px;width:37px;text-align:center;top:1021px;font-size:11px;color:#000;">Fast</div>
<div class="ab" style="left:82px;top:1015px;width:37px;height:24px;background:#e1e1e1;border:1px solid #adadad"></div>
<div class="t" style="left:82px;width:37px;text-align:center;top:1021px;font-size:11px;color:#000;">Med</div>
<div class="ab" style="left:121px;top:1015px;width:37px;height:24px;background:#cce4f7;border:1px solid #3c8ad8"></div>
<div class="t" style="left:121px;width:37px;text-align:center;top:1021px;font-size:11px;color:#000;">Slow</div>
<svg class="ab" style="left:170px;top:1018px" width="80" height="18" viewBox="0 0 80 18">
<path d="M18 14 Q18 6 8 7 L8 4 L2 8.5 L8 13 L8 10 Q15 10 16 15" fill="#202020"/>
<rect x="34" y="4" width="12" height="9" fill="#e8e8e8" stroke="#a0a8b0"/><rect x="40" y="7" width="6" height="6" fill="#c8d0d8" stroke="#a0a8b0"/>
<path d="M63 2 V16 H78 M64 14 L67 9 L70 11 L73 5 L76 7" fill="none" stroke="#505050" stroke-width="1"/>
</svg>
<div class="ab" style="left:0;top:1048px;width:1904px;height:24px;background:#f0f0f0;border-top:1px solid #dadada"></div>
<div class="t" style="left:9px;top:1054px;font-size:11px;color:#6d6d6d;">RX-666, BW = 1.000 MHz</div>
<svg class="ab" style="left:281px;top:144px" width="1583" height="491" viewBox="0 0 1583 491" font-family="Liberation Sans">
<defs><linearGradient id="sg" gradientUnits="userSpaceOnUse" x1="0" y1="186" x2="0" y2="491"><stop offset="0" stop-color="#d04c08"/><stop offset="0.098" stop-color="#d07808"/><stop offset="0.226" stop-color="#c8c000"/><stop offset="0.295" stop-color="#90b800"/><stop offset="0.39" stop-color="#10a010"/><stop offset="0.459" stop-color="#10a040"/><stop offset="0.544" stop-color="#109090"/><stop offset="0.63" stop-color="#1070a0"/><stop offset="0.715" stop-color="#0a40a0"/><stop offset="0.8" stop-color="#101580"/><stop offset="0.885" stop-color="#141450"/><stop offset="0.97" stop-color="#141418"/><stop offset="1" stop-color="#141414"/></linearGradient></defs>
<rect width="1583" height="491" fill="#060606"/>
<path d="M0 491 L0 199.9 L2 204.2 L4 202.2 L6 198.4 L8 200.4 L10 204.7 L12 205.7 L14 202.1 L16 203.8 L18 205.2 L20 202.6 L22 202.2 L24 207.7 L26 210.2 L28 206.2 L30 200.6 L32 199.1 L34 206.3 L36 210.3 L38 209.7 L40 210.0 L42 207.7 L44 202.4 L46 201.6 L48 205.9 L50 208.5 L52 205.8 L54 202.4 L56 199.0 L58 201.4 L60 203.7 L62 198.8 L64 196.8 L66 197.4 L68 201.3 L70 207.0 L72 206.0 L74 204.8 L76 207.1 L78 207.2 L80 208.6 L82 207.3 L84 213.5 L86 213.8 L88 199.8 L90 198.2 L92 201.9 L94 202.5 L96 204.0 L98 208.5 L100 209.0 L102 205.7 L104 197.5 L106 198.7 L108 211.0 L110 216.6 L112 214.3 L114 214.3 L116 214.2 L118 206.2 L120 201.8 L122 201.4 L124 202.2 L126 219.0 L128 212.1 L130 207.1 L132 204.0 L134 196.0 L136 188.0 L138 196.0 L140 204.0 L142 205.8 L144 203.2 L146 203.6 L148 205.1 L150 204.9 L152 201.8 L154 199.6 L156 205.5 L158 208.0 L160 202.4 L162 200.9 L164 204.5 L166 206.2 L168 209.6 L170 205.5 L172 203.2 L174 205.2 L176 202.3 L178 205.2 L180 212.2 L182 212.5 L184 203.8 L186 204.2 L188 210.7 L190 214.6 L192 212.9 L194 215.5 L196 213.2 L198 210.6 L200 206.8 L202 205.7 L204 208.7 L206 212.2 L208 212.7 L210 205.8 L212 196.8 L214 195.0 L216 198.4 L218 208.2 L220 213.8 L222 209.6 L224 204.9 L226 206.3 L228 208.8 L230 207.9 L232 202.6 L234 199.7 L236 205.6 L238 206.8 L240 204.5 L242 203.5 L244 198.7 L246 203.0 L248 205.0 L250 203.3 L252 204.1 L254 203.5 L256 205.2 L258 205.5 L260 210.5 L262 212.7 L264 209.7 L266 208.7 L268 207.7 L270 207.1 L272 205.2 L274 205.9 L276 202.8 L278 199.1 L280 197.0 L282 199.2 L284 202.0 L286 200.4 L288 199.3 L290 200.1 L292 202.5 L294 202.9 L296 202.1 L298 205.7 L300 209.5 L302 207.5 L304 199.6 L306 194.8 L308 194.1 L310 199.2 L312 201.0 L314 198.8 L316 199.0 L318 200.4 L320 202.6 L322 202.1 L324 195.3 L326 200.9 L328 209.4 L330 208.3 L332 203.2 L334 193.9 L336 187.7 L338 191.7 L340 198.8 L342 198.5 L344 195.3 L346 194.9 L348 204.9 L350 212.8 L352 208.1 L354 204.9 L356 198.4 L358 197.0 L360 196.8 L362 198.4 L364 204.6 L366 205.9 L368 203.4 L370 200.2 L372 202.5 L374 208.6 L376 213.4 L378 212.5 L380 204.3 L382 201.7 L384 199.6 L386 198.2 L388 201.9 L390 198.9 L392 194.2 L394 187.6 L396 186.5 L398 192.6 L400 196.5 L402 197.3 L404 203.1 L406 210.7 L408 215.7 L410 217.7 L412 211.3 L414 208.4 L416 212.2 L418 215.2 L420 212.7 L422 200.8 L424 196.2 L426 200.4 L428 201.6 L430 202.6 L432 198.3 L434 199.2 L436 200.5 L438 199.6 L440 202.2 L442 207.2 L444 207.5 L446 206.6 L448 203.9 L450 206.2 L452 209.0 L454 202.3 L456 201.5 L458 203.6 L460 202.9 L462 201.7 L464 202.0 L466 201.2 L468 198.4 L470 196.2 L472 200.5 L474 205.6 L476 205.1 L478 203.1 L480 200.5 L482 201.3 L484 197.7 L486 203.2 L488 210.7 L490 208.8 L492 207.5 L494 204.6 L496 199.0 L498 202.3 L500 206.1 L502 204.5 L504 202.5 L506 202.0 L508 203.9 L510 197.5 L512 194.8 L514 201.8 L516 201.1 L518 197.1 L520 203.6 L522 208.8 L524 207.0 L526 208.5 L528 204.4 L530 199.2 L532 201.5 L534 201.8 L536 198.2 L538 204.0 L540 202.5 L542 204.2 L544 209.1 L546 202.9 L548 196.8 L550 200.6 L552 208.4 L554 204.9 L556 200.7 L558 208.3 L560 207.2 L562 199.6 L564 195.8 L566 199.5 L568 202.9 L570 202.8 L572 200.6 L574 202.1 L576 208.2 L578 208.5 L580 210.7 L582 208.7 L584 200.4 L586 205.0 L588 202.6 L590 198.8 L592 204.1 L594 205.0 L596 204.6 L598 205.8 L600 205.1 L602 205.1 L604 204.2 L606 204.5 L608 205.2 L610 200.3 L612 200.5 L614 203.0 L616 201.8 L618 199.9 L620 200.8 L622 202.7 L624 205.3 L626 209.1 L628 207.7 L630 205.6 L632 210.3 L634 209.3 L636 207.9 L638 209.5 L640 208.6 L642 205.0 L644 205.1 L646 198.1 L648 194.7 L650 205.4 L652 208.4 L654 201.6 L656 198.7 L658 197.9 L660 202.7 L662 210.8 L664 212.1 L666 205.3 L668 196.7 L670 194.2 L672 199.3 L674 202.3 L676 205.3 L678 203.5 L680 202.2 L682 198.0 L684 197.8 L686 201.9 L688 201.8 L690 199.5 L692 197.7 L694 202.4 L696 201.1 L698 196.0 L700 196.5 L702 203.3 L704 201.0 L706 196.9 L708 198.6 L710 200.7 L712 203.0 L714 204.8 L716 205.5 L718 205.2 L720 207.2 L722 210.0 L724 204.0 L726 197.2 L728 195.0 L730 199.8 L732 199.8 L734 198.9 L736 200.4 L738 201.9 L740 200.6 L742 198.6 L744 201.6 L746 207.5 L748 209.4 L750 203.1 L752 193.4 L754 195.4 L756 202.6 L758 200.5 L760 194.2 L762 194.2 L764 203.1 L766 205.4 L767 187.4 L768 154.2 L769 121.0 L770 154.2 L771 187.4 L772 204.6 L774 202.8 L776 204.9 L778 205.4 L780 203.1 L782 206.7 L784 202.7 L786 200.2 L788 202.1 L790 203.8 L792 204.7 L794 213.0 L796 212.3 L798 205.8 L800 205.5 L802 205.3 L804 201.8 L806 199.1 L808 200.3 L810 197.5 L812 192.0 L814 184.0 L816 192.0 L818 192.9 L820 196.3 L822 200.4 L824 204.6 L826 206.9 L828 201.0 L830 200.6 L832 205.4 L834 205.1 L836 200.7 L838 196.6 L840 201.8 L842 207.0 L844 204.9 L846 206.3 L848 206.2 L850 206.0 L852 206.2 L854 208.4 L856 204.1 L858 205.1 L860 202.3 L862 192.7 L864 190.9 L866 191.8 L868 195.2 L870 203.4 L872 206.8 L874 198.5 L876 193.1 L878 198.6 L880 207.8 L882 212.4 L884 209.6 L886 203.6 L888 201.4 L890 206.8 L892 206.8 L894 204.6 L896 201.6 L898 200.6 L900 201.7 L902 202.3 L904 196.8 L906 189.3 L908 202.1 L910 208.5 L912 206.3 L914 204.4 L916 205.7 L918 210.9 L920 209.2 L922 209.4 L924 210.7 L926 203.5 L928 200.5 L930 204.7 L932 205.1 L934 201.9 L936 200.1 L938 200.0 L940 202.6 L942 206.2 L944 202.9 L946 199.9 L948 197.7 L950 197.6 L952 201.5 L954 203.4 L956 209.4 L958 220.4 L960 218.8 L962 211.4 L964 207.6 L966 201.0 L968 195.9 L970 196.2 L971 197.7 L972 191.3 L973 185.0 L974 191.3 L975 197.7 L976 199.8 L978 201.0 L980 199.5 L982 202.1 L984 204.6 L986 205.1 L988 214.4 L990 215.6 L992 208.8 L994 208.1 L996 208.2 L998 204.5 L1000 203.6 L1002 205.6 L1004 202.6 L1006 197.1 L1008 200.0 L1010 205.6 L1012 205.5 L1014 207.1 L1016 208.8 L1018 209.5 L1020 202.8 L1022 199.5 L1024 199.6 L1026 198.5 L1028 198.3 L1030 202.7 L1032 202.9 L1034 204.3 L1036 210.2 L1038 213.9 L1040 208.5 L1042 201.2 L1044 199.1 L1046 203.7 L1048 207.6 L1050 206.7 L1052 203.8 L1054 199.2 L1056 198.6 L1058 201.7 L1060 205.7 L1062 208.6 L1064 209.5 L1066 210.0 L1068 205.6 L1070 205.6 L1072 212.8 L1074 214.7 L1076 210.2 L1078 209.7 L1080 210.9 L1082 209.5 L1084 207.1 L1086 204.6 L1088 200.5 L1090 198.4 L1092 199.1 L1094 201.6 L1096 207.3 L1098 208.0 L1100 200.5 L1102 197.6 L1104 200.6 L1106 207.4 L1108 210.2 L1110 206.4 L1112 202.7 L1114 197.1 L1116 201.3 L1118 208.2 L1120 213.0 L1122 206.3 L1124 201.3 L1126 206.2 L1128 207.1 L1130 206.2 L1132 201.7 L1134 195.7 L1136 197.2 L1138 202.7 L1140 209.4 L1142 213.8 L1144 209.7 L1146 200.3 L1148 201.2 L1150 207.3 L1152 207.9 L1154 206.6 L1156 208.4 L1158 208.2 L1160 204.0 L1162 203.9 L1164 212.9 L1166 214.6 L1168 208.7 L1170 204.1 L1172 201.2 L1174 201.8 L1176 198.7 L1178 200.7 L1180 204.7 L1182 203.2 L1184 203.6 L1186 207.3 L1188 207.3 L1190 201.7 L1192 195.1 L1194 196.5 L1196 200.5 L1198 198.8 L1200 198.7 L1202 203.0 L1204 205.5 L1206 206.2 L1208 210.0 L1210 201.6 L1212 193.4 L1214 201.1 L1216 209.2 L1218 209.0 L1220 208.0 L1222 207.6 L1224 208.4 L1226 218.0 L1228 215.1 L1230 205.5 L1232 209.0 L1234 211.8 L1236 212.1 L1238 211.6 L1240 209.4 L1242 210.9 L1244 203.8 L1246 199.7 L1248 202.1 L1250 204.3 L1252 203.6 L1254 203.7 L1256 204.8 L1258 204.0 L1260 195.3 L1262 186.7 L1264 178.0 L1266 186.7 L1268 195.3 L1270 199.0 L1272 201.5 L1274 200.4 L1276 202.6 L1278 208.5 L1280 209.7 L1282 208.4 L1284 206.6 L1286 204.4 L1288 200.3 L1290 198.9 L1292 201.6 L1294 208.8 L1296 213.0 L1298 209.3 L1300 203.1 L1302 201.1 L1304 203.3 L1306 209.5 L1308 211.1 L1310 207.7 L1312 205.6 L1314 207.3 L1316 211.5 L1318 207.4 L1320 196.0 L1322 194.5 L1324 203.4 L1326 206.1 L1328 202.3 L1330 202.1 L1332 200.2 L1334 202.4 L1336 205.2 L1338 210.6 L1340 208.2 L1342 202.4 L1344 203.0 L1346 198.9 L1348 195.7 L1350 199.8 L1352 207.5 L1354 209.3 L1356 205.9 L1358 200.3 L1360 201.9 L1362 203.4 L1364 205.0 L1366 203.0 L1368 201.7 L1370 200.2 L1372 200.0 L1374 200.0 L1376 200.4 L1378 204.8 L1380 210.0 L1382 206.9 L1384 206.7 L1386 211.6 L1388 207.2 L1390 201.2 L1392 202.8 L1394 208.0 L1396 207.3 L1398 200.8 L1400 197.7 L1402 197.7 L1404 200.4 L1406 204.4 L1408 206.1 L1410 206.6 L1412 202.7 L1414 203.7 L1416 201.9 L1418 198.4 L1420 202.1 L1422 208.3 L1424 205.2 L1426 201.8 L1428 209.2 L1430 212.2 L1432 206.6 L1434 198.9 L1436 205.5 L1438 213.2 L1440 210.1 L1442 205.1 L1444 201.5 L1446 202.5 L1448 202.4 L1450 201.0 L1452 207.2 L1454 211.6 L1456 209.6 L1458 204.8 L1460 201.6 L1462 202.0 L1464 202.8 L1466 205.7 L1468 208.9 L1470 205.2 L1472 206.0 L1474 210.1 L1476 206.3 L1478 201.7 L1480 202.4 L1482 201.0 L1484 199.0 L1486 200.7 L1488 205.0 L1490 209.4 L1492 209.3 L1494 203.8 L1496 211.6 L1498 218.9 L1500 210.8 L1502 205.0 L1504 210.6 L1506 212.4 L1508 207.6 L1510 204.2 L1512 200.9 L1514 201.7 L1516 205.4 L1518 202.7 L1520 199.3 L1522 197.4 L1524 199.4 L1526 203.9 L1528 208.2 L1530 209.7 L1532 205.1 L1534 199.7 L1536 195.5 L1538 197.0 L1540 198.4 L1542 196.2 L1544 194.1 L1546 197.0 L1548 196.0 L1550 192.8 L1552 196.6 L1554 202.2 L1556 204.3 L1558 210.8 L1560 212.5 L1562 206.9 L1564 203.6 L1566 204.5 L1568 198.6 L1570 198.1 L1572 203.3 L1574 203.1 L1576 200.7 L1578 200.7 L1580 178.0 L1582 199.8 L1583 491 Z" fill="url(#sg)"/>

<path d="M52 13.5 H1532" stroke="#8c8c8c" stroke-width="1" stroke-dasharray="1 3"/>
<text x="4" y="17.0" font-size="10.2" fill="#e8e8e8">-110 dBm</text>
<text x="1579" y="17.0" font-size="10.2" fill="#e8e8e8" text-anchor="end">-110 dBm</text>
<path d="M52 32.5 H1532" stroke="#8c8c8c" stroke-width="1" stroke-dasharray="1 3"/>
<text x="4" y="35.7" font-size="10.2" fill="#e8e8e8">-112 dBm</text>
<text x="1579" y="35.7" font-size="10.2" fill="#e8e8e8" text-anchor="end">-112 dBm</text>
<path d="M52 50.5 H1532" stroke="#8c8c8c" stroke-width="1" stroke-dasharray="1 3"/>
<text x="4" y="54.4" font-size="10.2" fill="#e8e8e8">-114 dBm</text>
<text x="1579" y="54.4" font-size="10.2" fill="#e8e8e8" text-anchor="end">-114 dBm</text>
<path d="M52 69.5 H1532" stroke="#8c8c8c" stroke-width="1" stroke-dasharray="1 3"/>
<text x="4" y="73.0" font-size="10.2" fill="#e8e8e8">-116 dBm</text>
<text x="1579" y="73.0" font-size="10.2" fill="#e8e8e8" text-anchor="end">-116 dBm</text>
<path d="M52 88.5 H1532" stroke="#8c8c8c" stroke-width="1" stroke-dasharray="1 3"/>
<text x="4" y="91.7" font-size="10.2" fill="#e8e8e8">-118 dBm</text>
<text x="1579" y="91.7" font-size="10.2" fill="#e8e8e8" text-anchor="end">-118 dBm</text>
<path d="M52 106.5 H1532" stroke="#8c8c8c" stroke-width="1" stroke-dasharray="1 3"/>
<text x="4" y="110.4" font-size="10.2" fill="#e8e8e8">-120 dBm</text>
<text x="1579" y="110.4" font-size="10.2" fill="#e8e8e8" text-anchor="end">-120 dBm</text>
<path d="M52 125.5 H1532" stroke="#8c8c8c" stroke-width="1" stroke-dasharray="1 3"/>
<text x="4" y="129.1" font-size="10.2" fill="#e8e8e8">-122 dBm</text>
<text x="1579" y="129.1" font-size="10.2" fill="#e8e8e8" text-anchor="end">-122 dBm</text>
<path d="M52 144.5 H1532" stroke="#8c8c8c" stroke-width="1" stroke-dasharray="1 3"/>
<text x="4" y="147.8" font-size="10.2" fill="#e8e8e8">-124 dBm</text>
<text x="1579" y="147.8" font-size="10.2" fill="#e8e8e8" text-anchor="end">-124 dBm</text>
<path d="M52 162.5 H1532" stroke="#8c8c8c" stroke-width="1" stroke-dasharray="1 3"/>
<text x="4" y="166.4" font-size="10.2" fill="#e8e8e8">-126 dBm</text>
<text x="1579" y="166.4" font-size="10.2" fill="#e8e8e8" text-anchor="end">-126 dBm</text>
<path d="M52 181.5 H1532" stroke="#8c8c8c" stroke-width="1" stroke-dasharray="1 3"/>
<text x="4" y="185.1" font-size="10.2" fill="#e8e8e8">-128 dBm</text>
<text x="1579" y="185.1" font-size="10.2" fill="#e8e8e8" text-anchor="end">-128 dBm</text>
<path d="M52 200.5 H1532" stroke="#8c8c8c" stroke-width="1" stroke-dasharray="1 3"/>
<text x="4" y="203.8" font-size="10.2" fill="#e8e8e8">-130 dBm</text>
<text x="1579" y="203.8" font-size="10.2" fill="#e8e8e8" text-anchor="end">-130 dBm</text>
<path d="M52 218.5 H1532" stroke="#8c8c8c" stroke-width="1" stroke-dasharray="1 3"/>
<text x="4" y="222.5" font-size="10.2" fill="#f0a040">-132 dBm</text>
<text x="1579" y="222.5" font-size="10.2" fill="#f0a040" text-anchor="end">-132 dBm</text>
<path d="M52 237.5 H1532" stroke="#8c8c8c" stroke-width="1" stroke-dasharray="1 3"/>
<text x="4" y="241.2" font-size="10.2" fill="#e8e040">-134 dBm</text>
<text x="1579" y="241.2" font-size="10.2" fill="#e8e040" text-anchor="end">-134 dBm</text>
<path d="M52 256.5 H1532" stroke="#8c8c8c" stroke-width="1" stroke-dasharray="1 3"/>
<text x="4" y="259.8" font-size="10.2" fill="#e8e040">-136 dBm</text>
<text x="1579" y="259.8" font-size="10.2" fill="#e8e040" text-anchor="end">-136 dBm</text>
<path d="M52 275.5 H1532" stroke="#8c8c8c" stroke-width="1" stroke-dasharray="1 3"/>
<text x="4" y="278.5" font-size="10.2" fill="#c0e040">-138 dBm</text>
<text x="1579" y="278.5" font-size="10.2" fill="#c0e040" text-anchor="end">-138 dBm</text>
<path d="M52 293.5 H1532" stroke="#8c8c8c" stroke-width="1" stroke-dasharray="1 3"/>
<text x="4" y="297.2" font-size="10.2" fill="#60e060">-140 dBm</text>
<text x="1579" y="297.2" font-size="10.2" fill="#60e060" text-anchor="end">-140 dBm</text>
<path d="M52 312.5 H1532" stroke="#8c8c8c" stroke-width="1" stroke-dasharray="1 3"/>
<text x="4" y="315.9" font-size="10.2" fill="#60e060">-142 dBm</text>
<text x="1579" y="315.9" font-size="10.2" fill="#60e060" text-anchor="end">-142 dBm</text>
<path d="M52 331.5 H1532" stroke="#8c8c8c" stroke-width="1" stroke-dasharray="1 3"/>
<text x="4" y="334.6" font-size="10.2" fill="#50e090">-144 dBm</text>
<text x="1579" y="334.6" font-size="10.2" fill="#50e090" text-anchor="end">-144 dBm</text>
<path d="M52 349.5 H1532" stroke="#8c8c8c" stroke-width="1" stroke-dasharray="1 3"/>
<text x="4" y="353.2" font-size="10.2" fill="#40d0d0">-146 dBm</text>
<text x="1579" y="353.2" font-size="10.2" fill="#40d0d0" text-anchor="end">-146 dBm</text>
<path d="M52 368.5 H1532" stroke="#8c8c8c" stroke-width="1" stroke-dasharray="1 3"/>
<text x="4" y="371.9" font-size="10.2" fill="#50b0e0">-148 dBm</text>
<text x="1579" y="371.9" font-size="10.2" fill="#50b0e0" text-anchor="end">-148 dBm</text>
<path d="M52 387.5 H1532" stroke="#8c8c8c" stroke-width="1" stroke-dasharray="1 3"/>
<text x="4" y="390.6" font-size="10.2" fill="#50b0e0">-150 dBm</text>
<text x="1579" y="390.6" font-size="10.2" fill="#50b0e0" text-anchor="end">-150 dBm</text>
<path d="M52 405.5 H1532" stroke="#8c8c8c" stroke-width="1" stroke-dasharray="1 3"/>
<text x="4" y="409.3" font-size="10.2" fill="#6090f0">-152 dBm</text>
<text x="1579" y="409.3" font-size="10.2" fill="#6090f0" text-anchor="end">-152 dBm</text>
<path d="M52 424.5 H1532" stroke="#8c8c8c" stroke-width="1" stroke-dasharray="1 3"/>
<text x="4" y="428.0" font-size="10.2" fill="#7070e0">-154 dBm</text>
<text x="1579" y="428.0" font-size="10.2" fill="#7070e0" text-anchor="end">-154 dBm</text>
<path d="M52 443.5 H1532" stroke="#8c8c8c" stroke-width="1" stroke-dasharray="1 3"/>
<text x="4" y="446.6" font-size="10.2" fill="#7070e0">-156 dBm</text>
<text x="1579" y="446.6" font-size="10.2" fill="#7070e0" text-anchor="end">-156 dBm</text>
<path d="M52 461.5 H1532" stroke="#8c8c8c" stroke-width="1" stroke-dasharray="1 3"/>
<text x="4" y="465.3" font-size="10.2" fill="#9090d0">-158 dBm</text>
<text x="1579" y="465.3" font-size="10.2" fill="#9090d0" text-anchor="end">-158 dBm</text>
<path d="M52 480.5 H1532" stroke="#8c8c8c" stroke-width="1" stroke-dasharray="1 3"/>
<text x="4" y="484.0" font-size="10.2" fill="#b0b0c0">-160 dBm</text>
<text x="1579" y="484.0" font-size="10.2" fill="#b0b0c0" text-anchor="end">-160 dBm</text>
<path d="M0 199.9 L2 204.2 L4 202.2 L6 198.4 L8 200.4 L10 204.7 L12 205.7 L14 202.1 L16 203.8 L18 205.2 L20 202.6 L22 202.2 L24 207.7 L26 210.2 L28 206.2 L30 200.6 L32 199.1 L34 206.3 L36 210.3 L38 209.7 L40 210.0 L42 207.7 L44 202.4 L46 201.6 L48 205.9 L50 208.5 L52 205.8 L54 202.4 L56 199.0 L58 201.4 L60 203.7 L62 198.8 L64 196.8 L66 197.4 L68 201.3 L70 207.0 L72 206.0 L74 204.8 L76 207.1 L78 207.2 L80 208.6 L82 207.3 L84 213.5 L86 213.8 L88 199.8 L90 198.2 L92 201.9 L94 202.5 L96 204.0 L98 208.5 L100 209.0 L102 205.7 L104 197.5 L106 198.7 L108 211.0 L110 216.6 L112 214.3 L114 214.3 L116 214.2 L118 206.2 L120 201.8 L122 201.4 L124 202.2 L126 219.0 L128 212.1 L130 207.1 L132 204.0 L134 196.0 L136 188.0 L138 196.0 L140 204.0 L142 205.8 L144 203.2 L146 203.6 L148 205.1 L150 204.9 L152 201.8 L154 199.6 L156 205.5 L158 208.0 L160 202.4 L162 200.9 L164 204.5 L166 206.2 L168 209.6 L170 205.5 L172 203.2 L174 205.2 L176 202.3 L178 205.2 L180 212.2 L182 212.5 L184 203.8 L186 204.2 L188 210.7 L190 214.6 L192 212.9 L194 215.5 L196 213.2 L198 210.6 L200 206.8 L202 205.7 L204 208.7 L206 212.2 L208 212.7 L210 205.8 L212 196.8 L214 195.0 L216 198.4 L218 208.2 L220 213.8 L222 209.6 L224 204.9 L226 206.3 L228 208.8 L230 207.9 L232 202.6 L234 199.7 L236 205.6 L238 206.8 L240 204.5 L242 203.5 L244 198.7 L246 203.0 L248 205.0 L250 203.3 L252 204.1 L254 203.5 L256 205.2 L258 205.5 L260 210.5 L262 212.7 L264 209.7 L266 208.7 L268 207.7 L270 207.1 L272 205.2 L274 205.9 L276 202.8 L278 199.1 L280 197.0 L282 199.2 L284 202.0 L286 200.4 L288 199.3 L290 200.1 L292 202.5 L294 202.9 L296 202.1 L298 205.7 L300 209.5 L302 207.5 L304 199.6 L306 194.8 L308 194.1 L310 199.2 L312 201.0 L314 198.8 L316 199.0 L318 200.4 L320 202.6 L322 202.1 L324 195.3 L326 200.9 L328 209.4 L330 208.3 L332 203.2 L334 193.9 L336 187.7 L338 191.7 L340 198.8 L342 198.5 L344 195.3 L346 194.9 L348 204.9 L350 212.8 L352 208.1 L354 204.9 L356 198.4 L358 197.0 L360 196.8 L362 198.4 L364 204.6 L366 205.9 L368 203.4 L370 200.2 L372 202.5 L374 208.6 L376 213.4 L378 212.5 L380 204.3 L382 201.7 L384 199.6 L386 198.2 L388 201.9 L390 198.9 L392 194.2 L394 187.6 L396 186.5 L398 192.6 L400 196.5 L402 197.3 L404 203.1 L406 210.7 L408 215.7 L410 217.7 L412 211.3 L414 208.4 L416 212.2 L418 215.2 L420 212.7 L422 200.8 L424 196.2 L426 200.4 L428 201.6 L430 202.6 L432 198.3 L434 199.2 L436 200.5 L438 199.6 L440 202.2 L442 207.2 L444 207.5 L446 206.6 L448 203.9 L450 206.2 L452 209.0 L454 202.3 L456 201.5 L458 203.6 L460 202.9 L462 201.7 L464 202.0 L466 201.2 L468 198.4 L470 196.2 L472 200.5 L474 205.6 L476 205.1 L478 203.1 L480 200.5 L482 201.3 L484 197.7 L486 203.2 L488 210.7 L490 208.8 L492 207.5 L494 204.6 L496 199.0 L498 202.3 L500 206.1 L502 204.5 L504 202.5 L506 202.0 L508 203.9 L510 197.5 L512 194.8 L514 201.8 L516 201.1 L518 197.1 L520 203.6 L522 208.8 L524 207.0 L526 208.5 L528 204.4 L530 199.2 L532 201.5 L534 201.8 L536 198.2 L538 204.0 L540 202.5 L542 204.2 L544 209.1 L546 202.9 L548 196.8 L550 200.6 L552 208.4 L554 204.9 L556 200.7 L558 208.3 L560 207.2 L562 199.6 L564 195.8 L566 199.5 L568 202.9 L570 202.8 L572 200.6 L574 202.1 L576 208.2 L578 208.5 L580 210.7 L582 208.7 L584 200.4 L586 205.0 L588 202.6 L590 198.8 L592 204.1 L594 205.0 L596 204.6 L598 205.8 L600 205.1 L602 205.1 L604 204.2 L606 204.5 L608 205.2 L610 200.3 L612 200.5 L614 203.0 L616 201.8 L618 199.9 L620 200.8 L622 202.7 L624 205.3 L626 209.1 L628 207.7 L630 205.6 L632 210.3 L634 209.3 L636 207.9 L638 209.5 L640 208.6 L642 205.0 L644 205.1 L646 198.1 L648 194.7 L650 205.4 L652 208.4 L654 201.6 L656 198.7 L658 197.9 L660 202.7 L662 210.8 L664 212.1 L666 205.3 L668 196.7 L670 194.2 L672 199.3 L674 202.3 L676 205.3 L678 203.5 L680 202.2 L682 198.0 L684 197.8 L686 201.9 L688 201.8 L690 199.5 L692 197.7 L694 202.4 L696 201.1 L698 196.0 L700 196.5 L702 203.3 L704 201.0 L706 196.9 L708 198.6 L710 200.7 L712 203.0 L714 204.8 L716 205.5 L718 205.2 L720 207.2 L722 210.0 L724 204.0 L726 197.2 L728 195.0 L730 199.8 L732 199.8 L734 198.9 L736 200.4 L738 201.9 L740 200.6 L742 198.6 L744 201.6 L746 207.5 L748 209.4 L750 203.1 L752 193.4 L754 195.4 L756 202.6 L758 200.5 L760 194.2 L762 194.2 L764 203.1 L766 205.4 L767 187.4 L768 154.2 L769 121.0 L770 154.2 L771 187.4 L772 204.6 L774 202.8 L776 204.9 L778 205.4 L780 203.1 L782 206.7 L784 202.7 L786 200.2 L788 202.1 L790 203.8 L792 204.7 L794 213.0 L796 212.3 L798 205.8 L800 205.5 L802 205.3 L804 201.8 L806 199.1 L808 200.3 L810 197.5 L812 192.0 L814 184.0 L816 192.0 L818 192.9 L820 196.3 L822 200.4 L824 204.6 L826 206.9 L828 201.0 L830 200.6 L832 205.4 L834 205.1 L836 200.7 L838 196.6 L840 201.8 L842 207.0 L844 204.9 L846 206.3 L848 206.2 L850 206.0 L852 206.2 L854 208.4 L856 204.1 L858 205.1 L860 202.3 L862 192.7 L864 190.9 L866 191.8 L868 195.2 L870 203.4 L872 206.8 L874 198.5 L876 193.1 L878 198.6 L880 207.8 L882 212.4 L884 209.6 L886 203.6 L888 201.4 L890 206.8 L892 206.8 L894 204.6 L896 201.6 L898 200.6 L900 201.7 L902 202.3 L904 196.8 L906 189.3 L908 202.1 L910 208.5 L912 206.3 L914 204.4 L916 205.7 L918 210.9 L920 209.2 L922 209.4 L924 210.7 L926 203.5 L928 200.5 L930 204.7 L932 205.1 L934 201.9 L936 200.1 L938 200.0 L940 202.6 L942 206.2 L944 202.9 L946 199.9 L948 197.7 L950 197.6 L952 201.5 L954 203.4 L956 209.4 L958 220.4 L960 218.8 L962 211.4 L964 207.6 L966 201.0 L968 195.9 L970 196.2 L971 197.7 L972 191.3 L973 185.0 L974 191.3 L975 197.7 L976 199.8 L978 201.0 L980 199.5 L982 202.1 L984 204.6 L986 205.1 L988 214.4 L990 215.6 L992 208.8 L994 208.1 L996 208.2 L998 204.5 L1000 203.6 L1002 205.6 L1004 202.6 L1006 197.1 L1008 200.0 L1010 205.6 L1012 205.5 L1014 207.1 L1016 208.8 L1018 209.5 L1020 202.8 L1022 199.5 L1024 199.6 L1026 198.5 L1028 198.3 L1030 202.7 L1032 202.9 L1034 204.3 L1036 210.2 L1038 213.9 L1040 208.5 L1042 201.2 L1044 199.1 L1046 203.7 L1048 207.6 L1050 206.7 L1052 203.8 L1054 199.2 L1056 198.6 L1058 201.7 L1060 205.7 L1062 208.6 L1064 209.5 L1066 210.0 L1068 205.6 L1070 205.6 L1072 212.8 L1074 214.7 L1076 210.2 L1078 209.7 L1080 210.9 L1082 209.5 L1084 207.1 L1086 204.6 L1088 200.5 L1090 198.4 L1092 199.1 L1094 201.6 L1096 207.3 L1098 208.0 L1100 200.5 L1102 197.6 L1104 200.6 L1106 207.4 L1108 210.2 L1110 206.4 L1112 202.7 L1114 197.1 L1116 201.3 L1118 208.2 L1120 213.0 L1122 206.3 L1124 201.3 L1126 206.2 L1128 207.1 L1130 206.2 L1132 201.7 L1134 195.7 L1136 197.2 L1138 202.7 L1140 209.4 L1142 213.8 L1144 209.7 L1146 200.3 L1148 201.2 L1150 207.3 L1152 207.9 L1154 206.6 L1156 208.4 L1158 208.2 L1160 204.0 L1162 203.9 L1164 212.9 L1166 214.6 L1168 208.7 L1170 204.1 L1172 201.2 L1174 201.8 L1176 198.7 L1178 200.7 L1180 204.7 L1182 203.2 L1184 203.6 L1186 207.3 L1188 207.3 L1190 201.7 L1192 195.1 L1194 196.5 L1196 200.5 L1198 198.8 L1200 198.7 L1202 203.0 L1204 205.5 L1206 206.2 L1208 210.0 L1210 201.6 L1212 193.4 L1214 201.1 L1216 209.2 L1218 209.0 L1220 208.0 L1222 207.6 L1224 208.4 L1226 218.0 L1228 215.1 L1230 205.5 L1232 209.0 L1234 211.8 L1236 212.1 L1238 211.6 L1240 209.4 L1242 210.9 L1244 203.8 L1246 199.7 L1248 202.1 L1250 204.3 L1252 203.6 L1254 203.7 L1256 204.8 L1258 204.0 L1260 195.3 L1262 186.7 L1264 178.0 L1266 186.7 L1268 195.3 L1270 199.0 L1272 201.5 L1274 200.4 L1276 202.6 L1278 208.5 L1280 209.7 L1282 208.4 L1284 206.6 L1286 204.4 L1288 200.3 L1290 198.9 L1292 201.6 L1294 208.8 L1296 213.0 L1298 209.3 L1300 203.1 L1302 201.1 L1304 203.3 L1306 209.5 L1308 211.1 L1310 207.7 L1312 205.6 L1314 207.3 L1316 211.5 L1318 207.4 L1320 196.0 L1322 194.5 L1324 203.4 L1326 206.1 L1328 202.3 L1330 202.1 L1332 200.2 L1334 202.4 L1336 205.2 L1338 210.6 L1340 208.2 L1342 202.4 L1344 203.0 L1346 198.9 L1348 195.7 L1350 199.8 L1352 207.5 L1354 209.3 L1356 205.9 L1358 200.3 L1360 201.9 L1362 203.4 L1364 205.0 L1366 203.0 L1368 201.7 L1370 200.2 L1372 200.0 L1374 200.0 L1376 200.4 L1378 204.8 L1380 210.0 L1382 206.9 L1384 206.7 L1386 211.6 L1388 207.2 L1390 201.2 L1392 202.8 L1394 208.0 L1396 207.3 L1398 200.8 L1400 197.7 L1402 197.7 L1404 200.4 L1406 204.4 L1408 206.1 L1410 206.6 L1412 202.7 L1414 203.7 L1416 201.9 L1418 198.4 L1420 202.1 L1422 208.3 L1424 205.2 L1426 201.8 L1428 209.2 L1430 212.2 L1432 206.6 L1434 198.9 L1436 205.5 L1438 213.2 L1440 210.1 L1442 205.1 L1444 201.5 L1446 202.5 L1448 202.4 L1450 201.0 L1452 207.2 L1454 211.6 L1456 209.6 L1458 204.8 L1460 201.6 L1462 202.0 L1464 202.8 L1466 205.7 L1468 208.9 L1470 205.2 L1472 206.0 L1474 210.1 L1476 206.3 L1478 201.7 L1480 202.4 L1482 201.0 L1484 199.0 L1486 200.7 L1488 205.0 L1490 209.4 L1492 209.3 L1494 203.8 L1496 211.6 L1498 218.9 L1500 210.8 L1502 205.0 L1504 210.6 L1506 212.4 L1508 207.6 L1510 204.2 L1512 200.9 L1514 201.7 L1516 205.4 L1518 202.7 L1520 199.3 L1522 197.4 L1524 199.4 L1526 203.9 L1528 208.2 L1530 209.7 L1532 205.1 L1534 199.7 L1536 195.5 L1538 197.0 L1540 198.4 L1542 196.2 L1544 194.1 L1546 197.0 L1548 196.0 L1550 192.8 L1552 196.6 L1554 202.2 L1556 204.3 L1558 210.8 L1560 212.5 L1562 206.9 L1564 203.6 L1566 204.5 L1568 198.6 L1570 198.1 L1572 203.3 L1574 203.1 L1576 200.7 L1578 200.7 L1580 178.0 L1582 199.8" fill="none" stroke="#f4e8d8" stroke-width="1.1"/>
<clipPath id="pbc"><rect x="770" y="0" width="43" height="491"/></clipPath>
<linearGradient id="pbo" x1="0" y1="0" x2="0" y2="1"><stop offset="0" stop-color="rgb(60,200,60)" stop-opacity="0.35"/><stop offset="0.55" stop-color="rgb(110,170,110)" stop-opacity="0.28"/><stop offset="1" stop-color="rgb(170,170,190)" stop-opacity="0.16"/></linearGradient>
<rect x="770" y="2" width="43" height="489" fill="url(#pbo)"/>
<linearGradient id="pbg" x1="0" y1="0" x2="0" y2="1"><stop offset="0" stop-color="rgb(14,118,14)" stop-opacity="0.82"/><stop offset="1" stop-color="rgb(12,90,12)" stop-opacity="0.8"/></linearGradient>
<path d="M0 0 L0 199.9 L2 204.2 L4 202.2 L6 198.4 L8 200.4 L10 204.7 L12 205.7 L14 202.1 L16 203.8 L18 205.2 L20 202.6 L22 202.2 L24 207.7 L26 210.2 L28 206.2 L30 200.6 L32 199.1 L34 206.3 L36 210.3 L38 209.7 L40 210.0 L42 207.7 L44 202.4 L46 201.6 L48 205.9 L50 208.5 L52 205.8 L54 202.4 L56 199.0 L58 201.4 L60 203.7 L62 198.8 L64 196.8 L66 197.4 L68 201.3 L70 207.0 L72 206.0 L74 204.8 L76 207.1 L78 207.2 L80 208.6 L82 207.3 L84 213.5 L86 213.8 L88 199.8 L90 198.2 L92 201.9 L94 202.5 L96 204.0 L98 208.5 L100 209.0 L102 205.7 L104 197.5 L106 198.7 L108 211.0 L110 216.6 L112 214.3 L114 214.3 L116 214.2 L118 206.2 L120 201.8 L122 201.4 L124 202.2 L126 219.0 L128 212.1 L130 207.1 L132 204.0 L134 196.0 L136 188.0 L138 196.0 L140 204.0 L142 205.8 L144 203.2 L146 203.6 L148 205.1 L150 204.9 L152 201.8 L154 199.6 L156 205.5 L158 208.0 L160 202.4 L162 200.9 L164 204.5 L166 206.2 L168 209.6 L170 205.5 L172 203.2 L174 205.2 L176 202.3 L178 205.2 L180 212.2 L182 212.5 L184 203.8 L186 204.2 L188 210.7 L190 214.6 L192 212.9 L194 215.5 L196 213.2 L198 210.6 L200 206.8 L202 205.7 L204 208.7 L206 212.2 L208 212.7 L210 205.8 L212 196.8 L214 195.0 L216 198.4 L218 208.2 L220 213.8 L222 209.6 L224 204.9 L226 206.3 L228 208.8 L230 207.9 L232 202.6 L234 199.7 L236 205.6 L238 206.8 L240 204.5 L242 203.5 L244 198.7 L246 203.0 L248 205.0 L250 203.3 L252 204.1 L254 203.5 L256 205.2 L258 205.5 L260 210.5 L262 212.7 L264 209.7 L266 208.7 L268 207.7 L270 207.1 L272 205.2 L274 205.9 L276 202.8 L278 199.1 L280 197.0 L282 199.2 L284 202.0 L286 200.4 L288 199.3 L290 200.1 L292 202.5 L294 202.9 L296 202.1 L298 205.7 L300 209.5 L302 207.5 L304 199.6 L306 194.8 L308 194.1 L310 199.2 L312 201.0 L314 198.8 L316 199.0 L318 200.4 L320 202.6 L322 202.1 L324 195.3 L326 200.9 L328 209.4 L330 208.3 L332 203.2 L334 193.9 L336 187.7 L338 191.7 L340 198.8 L342 198.5 L344 195.3 L346 194.9 L348 204.9 L350 212.8 L352 208.1 L354 204.9 L356 198.4 L358 197.0 L360 196.8 L362 198.4 L364 204.6 L366 205.9 L368 203.4 L370 200.2 L372 202.5 L374 208.6 L376 213.4 L378 212.5 L380 204.3 L382 201.7 L384 199.6 L386 198.2 L388 201.9 L390 198.9 L392 194.2 L394 187.6 L396 186.5 L398 192.6 L400 196.5 L402 197.3 L404 203.1 L406 210.7 L408 215.7 L410 217.7 L412 211.3 L414 208.4 L416 212.2 L418 215.2 L420 212.7 L422 200.8 L424 196.2 L426 200.4 L428 201.6 L430 202.6 L432 198.3 L434 199.2 L436 200.5 L438 199.6 L440 202.2 L442 207.2 L444 207.5 L446 206.6 L448 203.9 L450 206.2 L452 209.0 L454 202.3 L456 201.5 L458 203.6 L460 202.9 L462 201.7 L464 202.0 L466 201.2 L468 198.4 L470 196.2 L472 200.5 L474 205.6 L476 205.1 L478 203.1 L480 200.5 L482 201.3 L484 197.7 L486 203.2 L488 210.7 L490 208.8 L492 207.5 L494 204.6 L496 199.0 L498 202.3 L500 206.1 L502 204.5 L504 202.5 L506 202.0 L508 203.9 L510 197.5 L512 194.8 L514 201.8 L516 201.1 L518 197.1 L520 203.6 L522 208.8 L524 207.0 L526 208.5 L528 204.4 L530 199.2 L532 201.5 L534 201.8 L536 198.2 L538 204.0 L540 202.5 L542 204.2 L544 209.1 L546 202.9 L548 196.8 L550 200.6 L552 208.4 L554 204.9 L556 200.7 L558 208.3 L560 207.2 L562 199.6 L564 195.8 L566 199.5 L568 202.9 L570 202.8 L572 200.6 L574 202.1 L576 208.2 L578 208.5 L580 210.7 L582 208.7 L584 200.4 L586 205.0 L588 202.6 L590 198.8 L592 204.1 L594 205.0 L596 204.6 L598 205.8 L600 205.1 L602 205.1 L604 204.2 L606 204.5 L608 205.2 L610 200.3 L612 200.5 L614 203.0 L616 201.8 L618 199.9 L620 200.8 L622 202.7 L624 205.3 L626 209.1 L628 207.7 L630 205.6 L632 210.3 L634 209.3 L636 207.9 L638 209.5 L640 208.6 L642 205.0 L644 205.1 L646 198.1 L648 194.7 L650 205.4 L652 208.4 L654 201.6 L656 198.7 L658 197.9 L660 202.7 L662 210.8 L664 212.1 L666 205.3 L668 196.7 L670 194.2 L672 199.3 L674 202.3 L676 205.3 L678 203.5 L680 202.2 L682 198.0 L684 197.8 L686 201.9 L688 201.8 L690 199.5 L692 197.7 L694 202.4 L696 201.1 L698 196.0 L700 196.5 L702 203.3 L704 201.0 L706 196.9 L708 198.6 L710 200.7 L712 203.0 L714 204.8 L716 205.5 L718 205.2 L720 207.2 L722 210.0 L724 204.0 L726 197.2 L728 195.0 L730 199.8 L732 199.8 L734 198.9 L736 200.4 L738 201.9 L740 200.6 L742 198.6 L744 201.6 L746 207.5 L748 209.4 L750 203.1 L752 193.4 L754 195.4 L756 202.6 L758 200.5 L760 194.2 L762 194.2 L764 203.1 L766 205.4 L767 187.4 L768 154.2 L769 121.0 L770 154.2 L771 187.4 L772 204.6 L774 202.8 L776 204.9 L778 205.4 L780 203.1 L782 206.7 L784 202.7 L786 200.2 L788 202.1 L790 203.8 L792 204.7 L794 213.0 L796 212.3 L798 205.8 L800 205.5 L802 205.3 L804 201.8 L806 199.1 L808 200.3 L810 197.5 L812 192.0 L814 184.0 L816 192.0 L818 192.9 L820 196.3 L822 200.4 L824 204.6 L826 206.9 L828 201.0 L830 200.6 L832 205.4 L834 205.1 L836 200.7 L838 196.6 L840 201.8 L842 207.0 L844 204.9 L846 206.3 L848 206.2 L850 206.0 L852 206.2 L854 208.4 L856 204.1 L858 205.1 L860 202.3 L862 192.7 L864 190.9 L866 191.8 L868 195.2 L870 203.4 L872 206.8 L874 198.5 L876 193.1 L878 198.6 L880 207.8 L882 212.4 L884 209.6 L886 203.6 L888 201.4 L890 206.8 L892 206.8 L894 204.6 L896 201.6 L898 200.6 L900 201.7 L902 202.3 L904 196.8 L906 189.3 L908 202.1 L910 208.5 L912 206.3 L914 204.4 L916 205.7 L918 210.9 L920 209.2 L922 209.4 L924 210.7 L926 203.5 L928 200.5 L930 204.7 L932 205.1 L934 201.9 L936 200.1 L938 200.0 L940 202.6 L942 206.2 L944 202.9 L946 199.9 L948 197.7 L950 197.6 L952 201.5 L954 203.4 L956 209.4 L958 220.4 L960 218.8 L962 211.4 L964 207.6 L966 201.0 L968 195.9 L970 196.2 L971 197.7 L972 191.3 L973 185.0 L974 191.3 L975 197.7 L976 199.8 L978 201.0 L980 199.5 L982 202.1 L984 204.6 L986 205.1 L988 214.4 L990 215.6 L992 208.8 L994 208.1 L996 208.2 L998 204.5 L1000 203.6 L1002 205.6 L1004 202.6 L1006 197.1 L1008 200.0 L1010 205.6 L1012 205.5 L1014 207.1 L1016 208.8 L1018 209.5 L1020 202.8 L1022 199.5 L1024 199.6 L1026 198.5 L1028 198.3 L1030 202.7 L1032 202.9 L1034 204.3 L1036 210.2 L1038 213.9 L1040 208.5 L1042 201.2 L1044 199.1 L1046 203.7 L1048 207.6 L1050 206.7 L1052 203.8 L1054 199.2 L1056 198.6 L1058 201.7 L1060 205.7 L1062 208.6 L1064 209.5 L1066 210.0 L1068 205.6 L1070 205.6 L1072 212.8 L1074 214.7 L1076 210.2 L1078 209.7 L1080 210.9 L1082 209.5 L1084 207.1 L1086 204.6 L1088 200.5 L1090 198.4 L1092 199.1 L1094 201.6 L1096 207.3 L1098 208.0 L1100 200.5 L1102 197.6 L1104 200.6 L1106 207.4 L1108 210.2 L1110 206.4 L1112 202.7 L1114 197.1 L1116 201.3 L1118 208.2 L1120 213.0 L1122 206.3 L1124 201.3 L1126 206.2 L1128 207.1 L1130 206.2 L1132 201.7 L1134 195.7 L1136 197.2 L1138 202.7 L1140 209.4 L1142 213.8 L1144 209.7 L1146 200.3 L1148 201.2 L1150 207.3 L1152 207.9 L1154 206.6 L1156 208.4 L1158 208.2 L1160 204.0 L1162 203.9 L1164 212.9 L1166 214.6 L1168 208.7 L1170 204.1 L1172 201.2 L1174 201.8 L1176 198.7 L1178 200.7 L1180 204.7 L1182 203.2 L1184 203.6 L1186 207.3 L1188 207.3 L1190 201.7 L1192 195.1 L1194 196.5 L1196 200.5 L1198 198.8 L1200 198.7 L1202 203.0 L1204 205.5 L1206 206.2 L1208 210.0 L1210 201.6 L1212 193.4 L1214 201.1 L1216 209.2 L1218 209.0 L1220 208.0 L1222 207.6 L1224 208.4 L1226 218.0 L1228 215.1 L1230 205.5 L1232 209.0 L1234 211.8 L1236 212.1 L1238 211.6 L1240 209.4 L1242 210.9 L1244 203.8 L1246 199.7 L1248 202.1 L1250 204.3 L1252 203.6 L1254 203.7 L1256 204.8 L1258 204.0 L1260 195.3 L1262 186.7 L1264 178.0 L1266 186.7 L1268 195.3 L1270 199.0 L1272 201.5 L1274 200.4 L1276 202.6 L1278 208.5 L1280 209.7 L1282 208.4 L1284 206.6 L1286 204.4 L1288 200.3 L1290 198.9 L1292 201.6 L1294 208.8 L1296 213.0 L1298 209.3 L1300 203.1 L1302 201.1 L1304 203.3 L1306 209.5 L1308 211.1 L1310 207.7 L1312 205.6 L1314 207.3 L1316 211.5 L1318 207.4 L1320 196.0 L1322 194.5 L1324 203.4 L1326 206.1 L1328 202.3 L1330 202.1 L1332 200.2 L1334 202.4 L1336 205.2 L1338 210.6 L1340 208.2 L1342 202.4 L1344 203.0 L1346 198.9 L1348 195.7 L1350 199.8 L1352 207.5 L1354 209.3 L1356 205.9 L1358 200.3 L1360 201.9 L1362 203.4 L1364 205.0 L1366 203.0 L1368 201.7 L1370 200.2 L1372 200.0 L1374 200.0 L1376 200.4 L1378 204.8 L1380 210.0 L1382 206.9 L1384 206.7 L1386 211.6 L1388 207.2 L1390 201.2 L1392 202.8 L1394 208.0 L1396 207.3 L1398 200.8 L1400 197.7 L1402 197.7 L1404 200.4 L1406 204.4 L1408 206.1 L1410 206.6 L1412 202.7 L1414 203.7 L1416 201.9 L1418 198.4 L1420 202.1 L1422 208.3 L1424 205.2 L1426 201.8 L1428 209.2 L1430 212.2 L1432 206.6 L1434 198.9 L1436 205.5 L1438 213.2 L1440 210.1 L1442 205.1 L1444 201.5 L1446 202.5 L1448 202.4 L1450 201.0 L1452 207.2 L1454 211.6 L1456 209.6 L1458 204.8 L1460 201.6 L1462 202.0 L1464 202.8 L1466 205.7 L1468 208.9 L1470 205.2 L1472 206.0 L1474 210.1 L1476 206.3 L1478 201.7 L1480 202.4 L1482 201.0 L1484 199.0 L1486 200.7 L1488 205.0 L1490 209.4 L1492 209.3 L1494 203.8 L1496 211.6 L1498 218.9 L1500 210.8 L1502 205.0 L1504 210.6 L1506 212.4 L1508 207.6 L1510 204.2 L1512 200.9 L1514 201.7 L1516 205.4 L1518 202.7 L1520 199.3 L1522 197.4 L1524 199.4 L1526 203.9 L1528 208.2 L1530 209.7 L1532 205.1 L1534 199.7 L1536 195.5 L1538 197.0 L1540 198.4 L1542 196.2 L1544 194.1 L1546 197.0 L1548 196.0 L1550 192.8 L1552 196.6 L1554 202.2 L1556 204.3 L1558 210.8 L1560 212.5 L1562 206.9 L1564 203.6 L1566 204.5 L1568 198.6 L1570 198.1 L1572 203.3 L1574 203.1 L1576 200.7 L1578 200.7 L1580 178.0 L1582 199.8 L1583 0 Z" fill="url(#pbg)" clip-path="url(#pbc)"/>
<path d="M0 199.9 L2 204.2 L4 202.2 L6 198.4 L8 200.4 L10 204.7 L12 205.7 L14 202.1 L16 203.8 L18 205.2 L20 202.6 L22 202.2 L24 207.7 L26 210.2 L28 206.2 L30 200.6 L32 199.1 L34 206.3 L36 210.3 L38 209.7 L40 210.0 L42 207.7 L44 202.4 L46 201.6 L48 205.9 L50 208.5 L52 205.8 L54 202.4 L56 199.0 L58 201.4 L60 203.7 L62 198.8 L64 196.8 L66 197.4 L68 201.3 L70 207.0 L72 206.0 L74 204.8 L76 207.1 L78 207.2 L80 208.6 L82 207.3 L84 213.5 L86 213.8 L88 199.8 L90 198.2 L92 201.9 L94 202.5 L96 204.0 L98 208.5 L100 209.0 L102 205.7 L104 197.5 L106 198.7 L108 211.0 L110 216.6 L112 214.3 L114 214.3 L116 214.2 L118 206.2 L120 201.8 L122 201.4 L124 202.2 L126 219.0 L128 212.1 L130 207.1 L132 204.0 L134 196.0 L136 188.0 L138 196.0 L140 204.0 L142 205.8 L144 203.2 L146 203.6 L148 205.1 L150 204.9 L152 201.8 L154 199.6 L156 205.5 L158 208.0 L160 202.4 L162 200.9 L164 204.5 L166 206.2 L168 209.6 L170 205.5 L172 203.2 L174 205.2 L176 202.3 L178 205.2 L180 212.2 L182 212.5 L184 203.8 L186 204.2 L188 210.7 L190 214.6 L192 212.9 L194 215.5 L196 213.2 L198 210.6 L200 206.8 L202 205.7 L204 208.7 L206 212.2 L208 212.7 L210 205.8 L212 196.8 L214 195.0 L216 198.4 L218 208.2 L220 213.8 L222 209.6 L224 204.9 L226 206.3 L228 208.8 L230 207.9 L232 202.6 L234 199.7 L236 205.6 L238 206.8 L240 204.5 L242 203.5 L244 198.7 L246 203.0 L248 205.0 L250 203.3 L252 204.1 L254 203.5 L256 205.2 L258 205.5 L260 210.5 L262 212.7 L264 209.7 L266 208.7 L268 207.7 L270 207.1 L272 205.2 L274 205.9 L276 202.8 L278 199.1 L280 197.0 L282 199.2 L284 202.0 L286 200.4 L288 199.3 L290 200.1 L292 202.5 L294 202.9 L296 202.1 L298 205.7 L300 209.5 L302 207.5 L304 199.6 L306 194.8 L308 194.1 L310 199.2 L312 201.0 L314 198.8 L316 199.0 L318 200.4 L320 202.6 L322 202.1 L324 195.3 L326 200.9 L328 209.4 L330 208.3 L332 203.2 L334 193.9 L336 187.7 L338 191.7 L340 198.8 L342 198.5 L344 195.3 L346 194.9 L348 204.9 L350 212.8 L352 208.1 L354 204.9 L356 198.4 L358 197.0 L360 196.8 L362 198.4 L364 204.6 L366 205.9 L368 203.4 L370 200.2 L372 202.5 L374 208.6 L376 213.4 L378 212.5 L380 204.3 L382 201.7 L384 199.6 L386 198.2 L388 201.9 L390 198.9 L392 194.2 L394 187.6 L396 186.5 L398 192.6 L400 196.5 L402 197.3 L404 203.1 L406 210.7 L408 215.7 L410 217.7 L412 211.3 L414 208.4 L416 212.2 L418 215.2 L420 212.7 L422 200.8 L424 196.2 L426 200.4 L428 201.6 L430 202.6 L432 198.3 L434 199.2 L436 200.5 L438 199.6 L440 202.2 L442 207.2 L444 207.5 L446 206.6 L448 203.9 L450 206.2 L452 209.0 L454 202.3 L456 201.5 L458 203.6 L460 202.9 L462 201.7 L464 202.0 L466 201.2 L468 198.4 L470 196.2 L472 200.5 L474 205.6 L476 205.1 L478 203.1 L480 200.5 L482 201.3 L484 197.7 L486 203.2 L488 210.7 L490 208.8 L492 207.5 L494 204.6 L496 199.0 L498 202.3 L500 206.1 L502 204.5 L504 202.5 L506 202.0 L508 203.9 L510 197.5 L512 194.8 L514 201.8 L516 201.1 L518 197.1 L520 203.6 L522 208.8 L524 207.0 L526 208.5 L528 204.4 L530 199.2 L532 201.5 L534 201.8 L536 198.2 L538 204.0 L540 202.5 L542 204.2 L544 209.1 L546 202.9 L548 196.8 L550 200.6 L552 208.4 L554 204.9 L556 200.7 L558 208.3 L560 207.2 L562 199.6 L564 195.8 L566 199.5 L568 202.9 L570 202.8 L572 200.6 L574 202.1 L576 208.2 L578 208.5 L580 210.7 L582 208.7 L584 200.4 L586 205.0 L588 202.6 L590 198.8 L592 204.1 L594 205.0 L596 204.6 L598 205.8 L600 205.1 L602 205.1 L604 204.2 L606 204.5 L608 205.2 L610 200.3 L612 200.5 L614 203.0 L616 201.8 L618 199.9 L620 200.8 L622 202.7 L624 205.3 L626 209.1 L628 207.7 L630 205.6 L632 210.3 L634 209.3 L636 207.9 L638 209.5 L640 208.6 L642 205.0 L644 205.1 L646 198.1 L648 194.7 L650 205.4 L652 208.4 L654 201.6 L656 198.7 L658 197.9 L660 202.7 L662 210.8 L664 212.1 L666 205.3 L668 196.7 L670 194.2 L672 199.3 L674 202.3 L676 205.3 L678 203.5 L680 202.2 L682 198.0 L684 197.8 L686 201.9 L688 201.8 L690 199.5 L692 197.7 L694 202.4 L696 201.1 L698 196.0 L700 196.5 L702 203.3 L704 201.0 L706 196.9 L708 198.6 L710 200.7 L712 203.0 L714 204.8 L716 205.5 L718 205.2 L720 207.2 L722 210.0 L724 204.0 L726 197.2 L728 195.0 L730 199.8 L732 199.8 L734 198.9 L736 200.4 L738 201.9 L740 200.6 L742 198.6 L744 201.6 L746 207.5 L748 209.4 L750 203.1 L752 193.4 L754 195.4 L756 202.6 L758 200.5 L760 194.2 L762 194.2 L764 203.1 L766 205.4 L767 187.4 L768 154.2 L769 121.0 L770 154.2 L771 187.4 L772 204.6 L774 202.8 L776 204.9 L778 205.4 L780 203.1 L782 206.7 L784 202.7 L786 200.2 L788 202.1 L790 203.8 L792 204.7 L794 213.0 L796 212.3 L798 205.8 L800 205.5 L802 205.3 L804 201.8 L806 199.1 L808 200.3 L810 197.5 L812 192.0 L814 184.0 L816 192.0 L818 192.9 L820 196.3 L822 200.4 L824 204.6 L826 206.9 L828 201.0 L830 200.6 L832 205.4 L834 205.1 L836 200.7 L838 196.6 L840 201.8 L842 207.0 L844 204.9 L846 206.3 L848 206.2 L850 206.0 L852 206.2 L854 208.4 L856 204.1 L858 205.1 L860 202.3 L862 192.7 L864 190.9 L866 191.8 L868 195.2 L870 203.4 L872 206.8 L874 198.5 L876 193.1 L878 198.6 L880 207.8 L882 212.4 L884 209.6 L886 203.6 L888 201.4 L890 206.8 L892 206.8 L894 204.6 L896 201.6 L898 200.6 L900 201.7 L902 202.3 L904 196.8 L906 189.3 L908 202.1 L910 208.5 L912 206.3 L914 204.4 L916 205.7 L918 210.9 L920 209.2 L922 209.4 L924 210.7 L926 203.5 L928 200.5 L930 204.7 L932 205.1 L934 201.9 L936 200.1 L938 200.0 L940 202.6 L942 206.2 L944 202.9 L946 199.9 L948 197.7 L950 197.6 L952 201.5 L954 203.4 L956 209.4 L958 220.4 L960 218.8 L962 211.4 L964 207.6 L966 201.0 L968 195.9 L970 196.2 L971 197.7 L972 191.3 L973 185.0 L974 191.3 L975 197.7 L976 199.8 L978 201.0 L980 199.5 L982 202.1 L984 204.6 L986 205.1 L988 214.4 L990 215.6 L992 208.8 L994 208.1 L996 208.2 L998 204.5 L1000 203.6 L1002 205.6 L1004 202.6 L1006 197.1 L1008 200.0 L1010 205.6 L1012 205.5 L1014 207.1 L1016 208.8 L1018 209.5 L1020 202.8 L1022 199.5 L1024 199.6 L1026 198.5 L1028 198.3 L1030 202.7 L1032 202.9 L1034 204.3 L1036 210.2 L1038 213.9 L1040 208.5 L1042 201.2 L1044 199.1 L1046 203.7 L1048 207.6 L1050 206.7 L1052 203.8 L1054 199.2 L1056 198.6 L1058 201.7 L1060 205.7 L1062 208.6 L1064 209.5 L1066 210.0 L1068 205.6 L1070 205.6 L1072 212.8 L1074 214.7 L1076 210.2 L1078 209.7 L1080 210.9 L1082 209.5 L1084 207.1 L1086 204.6 L1088 200.5 L1090 198.4 L1092 199.1 L1094 201.6 L1096 207.3 L1098 208.0 L1100 200.5 L1102 197.6 L1104 200.6 L1106 207.4 L1108 210.2 L1110 206.4 L1112 202.7 L1114 197.1 L1116 201.3 L1118 208.2 L1120 213.0 L1122 206.3 L1124 201.3 L1126 206.2 L1128 207.1 L1130 206.2 L1132 201.7 L1134 195.7 L1136 197.2 L1138 202.7 L1140 209.4 L1142 213.8 L1144 209.7 L1146 200.3 L1148 201.2 L1150 207.3 L1152 207.9 L1154 206.6 L1156 208.4 L1158 208.2 L1160 204.0 L1162 203.9 L1164 212.9 L1166 214.6 L1168 208.7 L1170 204.1 L1172 201.2 L1174 201.8 L1176 198.7 L1178 200.7 L1180 204.7 L1182 203.2 L1184 203.6 L1186 207.3 L1188 207.3 L1190 201.7 L1192 195.1 L1194 196.5 L1196 200.5 L1198 198.8 L1200 198.7 L1202 203.0 L1204 205.5 L1206 206.2 L1208 210.0 L1210 201.6 L1212 193.4 L1214 201.1 L1216 209.2 L1218 209.0 L1220 208.0 L1222 207.6 L1224 208.4 L1226 218.0 L1228 215.1 L1230 205.5 L1232 209.0 L1234 211.8 L1236 212.1 L1238 211.6 L1240 209.4 L1242 210.9 L1244 203.8 L1246 199.7 L1248 202.1 L1250 204.3 L1252 203.6 L1254 203.7 L1256 204.8 L1258 204.0 L1260 195.3 L1262 186.7 L1264 178.0 L1266 186.7 L1268 195.3 L1270 199.0 L1272 201.5 L1274 200.4 L1276 202.6 L1278 208.5 L1280 209.7 L1282 208.4 L1284 206.6 L1286 204.4 L1288 200.3 L1290 198.9 L1292 201.6 L1294 208.8 L1296 213.0 L1298 209.3 L1300 203.1 L1302 201.1 L1304 203.3 L1306 209.5 L1308 211.1 L1310 207.7 L1312 205.6 L1314 207.3 L1316 211.5 L1318 207.4 L1320 196.0 L1322 194.5 L1324 203.4 L1326 206.1 L1328 202.3 L1330 202.1 L1332 200.2 L1334 202.4 L1336 205.2 L1338 210.6 L1340 208.2 L1342 202.4 L1344 203.0 L1346 198.9 L1348 195.7 L1350 199.8 L1352 207.5 L1354 209.3 L1356 205.9 L1358 200.3 L1360 201.9 L1362 203.4 L1364 205.0 L1366 203.0 L1368 201.7 L1370 200.2 L1372 200.0 L1374 200.0 L1376 200.4 L1378 204.8 L1380 210.0 L1382 206.9 L1384 206.7 L1386 211.6 L1388 207.2 L1390 201.2 L1392 202.8 L1394 208.0 L1396 207.3 L1398 200.8 L1400 197.7 L1402 197.7 L1404 200.4 L1406 204.4 L1408 206.1 L1410 206.6 L1412 202.7 L1414 203.7 L1416 201.9 L1418 198.4 L1420 202.1 L1422 208.3 L1424 205.2 L1426 201.8 L1428 209.2 L1430 212.2 L1432 206.6 L1434 198.9 L1436 205.5 L1438 213.2 L1440 210.1 L1442 205.1 L1444 201.5 L1446 202.5 L1448 202.4 L1450 201.0 L1452 207.2 L1454 211.6 L1456 209.6 L1458 204.8 L1460 201.6 L1462 202.0 L1464 202.8 L1466 205.7 L1468 208.9 L1470 205.2 L1472 206.0 L1474 210.1 L1476 206.3 L1478 201.7 L1480 202.4 L1482 201.0 L1484 199.0 L1486 200.7 L1488 205.0 L1490 209.4 L1492 209.3 L1494 203.8 L1496 211.6 L1498 218.9 L1500 210.8 L1502 205.0 L1504 210.6 L1506 212.4 L1508 207.6 L1510 204.2 L1512 200.9 L1514 201.7 L1516 205.4 L1518 202.7 L1520 199.3 L1522 197.4 L1524 199.4 L1526 203.9 L1528 208.2 L1530 209.7 L1532 205.1 L1534 199.7 L1536 195.5 L1538 197.0 L1540 198.4 L1542 196.2 L1544 194.1 L1546 197.0 L1548 196.0 L1550 192.8 L1552 196.6 L1554 202.2 L1556 204.3 L1558 210.8 L1560 212.5 L1562 206.9 L1564 203.6 L1566 204.5 L1568 198.6 L1570 198.1 L1572 203.3 L1574 203.1 L1576 200.7 L1578 200.7 L1580 178.0 L1582 199.8" fill="none" stroke="#c8f0b0" stroke-width="1.1" clip-path="url(#pbc)"/>
<rect x="770.5" y="2" width="42" height="489" fill="none" stroke="#6ae06a" stroke-width="1"/>
<linearGradient id="pbt" x1="0" y1="0" x2="1" y2="0"><stop offset="0" stop-color="#28c028"/><stop offset="0.5" stop-color="#90ff90"/><stop offset="1" stop-color="#28c028"/></linearGradient>
<rect x="770" y="2" width="43" height="7" fill="url(#pbt)"/>
<rect x="770" y="484" width="43" height="7" fill="url(#pbt)" opacity="0.6"/>
<path d="M770 37.5 H813" stroke="#40c040" stroke-width="1"/>
<rect x="783" y="10" width="17" height="17" rx="2" fill="#0a3e0a"/>
<text x="791.5" y="23" font-size="10" fill="#d0e8d0" text-anchor="middle" font-weight="bold">1</text>
<rect x="55" y="3" width="367" height="57" fill="#050505"/><rect x="55" y="55" width="294" height="38" fill="#050505"/>
</svg>
<div class="t" style="left:337px;top:149px;font-size:47px;color:#fff;transform:scaleX(1.08);transform-origin:0 0">1</div>
<div class="t" style="left:366px;top:149px;font-size:47px;color:#fff;transform:scaleX(1.08);transform-origin:0 0">5</div>
<div class="t" style="left:416px;top:149px;font-size:47px;color:#fff;transform:scaleX(1.08);transform-origin:0 0">0</div>
<div class="t" style="left:443px;top:149px;font-size:47px;color:#fff;transform:scaleX(1.08);transform-origin:0 0">0</div>
<div class="t" style="left:469px;top:149px;font-size:47px;color:#fff;transform:scaleX(1.08);transform-origin:0 0">0</div>
<div class="t" style="left:522px;top:149px;font-size:47px;color:#fff;transform:scaleX(1.08);transform-origin:0 0">0</div>
<div class="t" style="left:548px;top:149px;font-size:47px;color:#fff;transform:scaleX(1.08);transform-origin:0 0">0</div>
<div class="t" style="left:575px;top:149px;font-size:47px;color:#fff;transform:scaleX(1.08);transform-origin:0 0">0</div>
<div class="ab" style="left:400px;top:182px;width:8px;height:8px;border-radius:3px;background:#fff"></div>
<div class="ab" style="left:506px;top:182px;width:8px;height:8px;border-radius:3px;background:#fff"></div>
<div class="t" style="left:618px;top:158px;font-family:'Liberation Mono', monospace;font-size:12px;color:#e0d040">RX 1</div>
<div class="t" style="left:664px;top:158px;font-family:'Liberation Mono', monospace;font-size:12px;color:#f0f0f0">USB</div>
<div class="t" style="left:618px;top:180px;font-family:'Liberation Mono', monospace;font-size:11px;color:#e0d040">0 - 2900 Hz</div>
<div class="t" style="left:353px;top:210px;font-size:19px;color:#fff;letter-spacing:0.5px">17</div>
<div class="t" style="left:383px;top:215px;font-size:12px;color:#fff">dB</div>
<div class="ab" style="left:406px;top:207px;width:27px;height:7px;background:linear-gradient(90deg,#3a3a30,#808068)"></div>
<div class="ab" style="left:429px;top:206px;width:8px;height:8px;border-radius:50%;background:#f0f020"></div>
<div class="ab" style="left:406px;top:219px;width:218px;height:2px;background:#a03434"></div>
<div class="t" style="left:606px;top:206px;font-size:9.5px;color:#909090;font-weight:bold">SNR</div>
<div class="t" style="left:422px;width:30px;text-align:center;top:223px;font-family:'Liberation Mono', monospace;font-size:9px;color:#c8d0d8;font-weight:bold">20</div>
<div class="t" style="left:453px;width:30px;text-align:center;top:223px;font-family:'Liberation Mono', monospace;font-size:9px;color:#c8d0d8;font-weight:bold">40</div>
<div class="t" style="left:484px;width:30px;text-align:center;top:223px;font-family:'Liberation Mono', monospace;font-size:9px;color:#c8d0d8;font-weight:bold">60</div>
<div class="t" style="left:515px;width:30px;text-align:center;top:223px;font-family:'Liberation Mono', monospace;font-size:9px;color:#c8d0d8;font-weight:bold">80</div>
<div class="t" style="left:546px;width:30px;text-align:center;top:223px;font-family:'Liberation Mono', monospace;font-size:9px;color:#c8d0d8;font-weight:bold">100</div>
<div class="t" style="left:577px;width:30px;text-align:center;top:223px;font-family:'Liberation Mono', monospace;font-size:9px;color:#c8d0d8;font-weight:bold">120</div>
<div class="ab" style="left:281px;top:635px;width:1583px;height:12px;background:linear-gradient(#707070,#585858 40%,#2a2a2a)"></div>
<div class="ab" style="left:287px;top:636px;width:1px;height:3px;background:#b4b4b4"></div><div class="ab" style="left:294px;top:636px;width:1px;height:3px;background:#b4b4b4"></div><div class="ab" style="left:301px;top:636px;width:1px;height:4px;background:#b4b4b4"></div><div class="ab" style="left:308px;top:636px;width:1px;height:3px;background:#b4b4b4"></div><div class="ab" style="left:315px;top:636px;width:1px;height:3px;background:#b4b4b4"></div><div class="ab" style="left:322px;top:636px;width:1px;height:3px;background:#b4b4b4"></div><div class="ab" style="left:330px;top:636px;width:1px;height:3px;background:#b4b4b4"></div><div class="ab" style="left:337px;top:636px;width:1px;height:4px;background:#b4b4b4"></div><div class="ab" style="left:344px;top:636px;width:1px;height:3px;background:#b4b4b4"></div><div class="ab" style="left:351px;top:636px;width:1px;height:3px;background:#b4b4b4"></div><div class="ab" style="left:358px;top:636px;width:1px;height:3px;background:#b4b4b4"></div><div class="ab" style="left:365px;top:636px;width:1px;height:3px;background:#b4b4b4"></div><div class="ab" style="left:372px;top:636px;width:1px;height:4px;background:#b4b4b4"></div><div class="ab" style="left:380px;top:636px;width:1px;height:3px;background:#b4b4b4"></div><div class="ab" style="left:387px;top:636px;width:1px;height:3px;background:#b4b4b4"></div><div class="ab" style="left:394px;top:636px;width:1px;height:3px;background:#b4b4b4"></div><div class="ab" style="left:401px;top:636px;width:1px;height:3px;background:#b4b4b4"></div><div class="ab" style="left:408px;top:636px;width:1px;height:4px;background:#b4b4b4"></div><div class="ab" style="left:415px;top:636px;width:1px;height:3px;background:#b4b4b4"></div><div class="ab" style="left:422px;top:636px;width:1px;height:3px;background:#b4b4b4"></div><div class="ab" style="left:430px;top:636px;width:1px;height:3px;background:#b4b4b4"></div><div class="ab" style="left:437px;top:636px;width:1px;height:3px;background:#b4b4b4"></div><div class="ab" style="left:444px;top:636px;width:1px;height:4px;background:#b4b4b4"></div><div class="ab" style="left:451px;top:636px;width:1px;height:3px;background:#b4b4b4"></div><div class="ab" style="left:458px;top:636px;width:1px;height:3px;background:#b4b4b4"></div><div class="ab" style="left:465px;top:636px;width:1px;height:3px;background:#b4b4b4"></div><div class="ab" style="left:472px;top:636px;width:1px;height:3px;background:#b4b4b4"></div><div class="ab" style="left:480px;top:636px;width:1px;height:4px;background:#b4b4b4"></div><div class="ab" style="left:487px;top:636px;width:1px;height:3px;background:#b4b4b4"></div><div class="ab" style="left:494px;top:636px;width:1px;height:3px;background:#b4b4b4"></div><div class="ab" style="left:501px;top:636px;width:1px;height:3px;background:#b4b4b4"></div><div class="ab" style="left:508px;top:636px;width:1px;height:3px;background:#b4b4b4"></div><div class="ab" style="left:515px;top:636px;width:1px;height:4px;background:#b4b4b4"></div><div class="ab" style="left:522px;top:636px;width:1px;height:3px;background:#b4b4b4"></div><div class="ab" style="left:530px;top:636px;width:1px;height:3px;background:#b4b4b4"></div><div class="ab" style="left:537px;top:636px;width:1px;height:3px;background:#b4b4b4"></div><div class="ab" style="left:544px;top:636px;width:1px;height:3px;background:#b4b4b4"></div><div class="ab" style="left:551px;top:636px;width:1px;height:4px;background:#b4b4b4"></div><div class="ab" style="left:558px;top:636px;width:1px;height:3px;background:#b4b4b4"></div><div class="ab" style="left:565px;top:636px;width:1px;height:3px;background:#b4b4b4"></div><div class="ab" style="left:572px;top:636px;width:1px;height:3px;background:#b4b4b4"></div><div class="ab" style="left:580px;top:636px;width:1px;height:3px;background:#b4b4b4"></div><div class="ab" style="left:587px;top:636px;width:1px;height:4px;background:#b4b4b4"></div><div class="ab" style="left:594px;top:636px;width:1px;height:3px;background:#b4b4b4"></div><div class="ab" style="left:601px;top:636px;width:1px;height:3px;background:#b4b4b4"></div><div class="ab" style="left:608px;top:636px;width:1px;height:3px;background:#b4b4b4"></div><div class="ab" style="left:615px;top:636px;width:1px;height:3px;background:#b4b4b4"></div><div class="ab" style="left:622px;top:636px;width:1px;height:4px;background:#b4b4b4"></div><div class="ab" style="left:630px;top:636px;width:1px;height:3px;background:#b4b4b4"></div><div class="ab" style="left:637px;top:636px;width:1px;height:3px;background:#b4b4b4"></div><div class="ab" style="left:644px;top:636px;width:1px;height:3px;background:#b4b4b4"></div><div class="ab" style="left:651px;top:636px;width:1px;height:3px;background:#b4b4b4"></div><div class="ab" style="left:658px;top:636px;width:1px;height:4px;background:#b4b4b4"></div><div class="ab" style="left:665px;top:636px;width:1px;height:3px;background:#b4b4b4"></div><div class="ab" style="left:672px;top:636px;width:1px;height:3px;background:#b4b4b4"></div><div class="ab" style="left:680px;top:636px;width:1px;height:3px;background:#b4b4b4"></div><div class="ab" style="left:687px;top:636px;width:1px;height:3px;background:#b4b4b4"></div><div class="ab" style="left:694px;top:636px;width:1px;height:4px;background:#b4b4b4"></div><div class="ab" style="left:701px;top:636px;width:1px;height:3px;background:#b4b4b4"></div><div class="ab" style="left:708px;top:636px;width:1px;height:3px;background:#b4b4b4"></div><div class="ab" style="left:715px;top:636px;width:1px;height:3px;background:#b4b4b4"></div><div class="ab" style="left:722px;top:636px;width:1px;height:3px;background:#b4b4b4"></div><div class="ab" style="left:730px;top:636px;width:1px;height:4px;background:#b4b4b4"></div><div class="ab" style="left:737px;top:636px;width:1px;height:3px;background:#b4b4b4"></div><div class="ab" style="left:744px;top:636px;width:1px;height:3px;background:#b4b4b4"></div><div class="ab" style="left:751px;top:636px;width:1px;height:3px;background:#b4b4b4"></div><div class="ab" style="left:758px;top:636px;width:1px;height:3px;background:#b4b4b4"></div><div class="ab" style="left:765px;top:636px;width:1px;height:4px;background:#b4b4b4"></div><div class="ab" style="left:772px;top:636px;width:1px;height:3px;background:#b4b4b4"></div><div class="ab" style="left:780px;top:636px;width:1px;height:3px;background:#b4b4b4"></div><div class="ab" style="left:787px;top:636px;width:1px;height:3px;background:#b4b4b4"></div><div class="ab" style="left:794px;top:636px;width:1px;height:3px;background:#b4b4b4"></div><div class="ab" style="left:801px;top:636px;width:1px;height:4px;background:#b4b4b4"></div><div class="ab" style="left:808px;top:636px;width:1px;height:3px;background:#b4b4b4"></div><div class="ab" style="left:815px;top:636px;width:1px;height:3px;background:#b4b4b4"></div><div class="ab" style="left:822px;top:636px;width:1px;height:3px;background:#b4b4b4"></div><div class="ab" style="left:830px;top:636px;width:1px;height:3px;background:#b4b4b4"></div><div class="ab" style="left:837px;top:636px;width:1px;height:4px;background:#b4b4b4"></div><div class="ab" style="left:844px;top:636px;width:1px;height:3px;background:#b4b4b4"></div><div class="ab" style="left:851px;top:636px;width:1px;height:3px;background:#b4b4b4"></div><div class="ab" style="left:858px;top:636px;width:1px;height:3px;background:#b4b4b4"></div><div class="ab" style="left:865px;top:636px;width:1px;height:3px;background:#b4b4b4"></div><div class="ab" style="left:872px;top:636px;width:1px;height:4px;background:#b4b4b4"></div><div class="ab" style="left:880px;top:636px;width:1px;height:3px;background:#b4b4b4"></div><div class="ab" style="left:887px;top:636px;width:1px;height:3px;background:#b4b4b4"></div><div class="ab" style="left:894px;top:636px;width:1px;height:3px;background:#b4b4b4"></div><div class="ab" style="left:901px;top:636px;width:1px;height:3px;background:#b4b4b4"></div><div class="ab" style="left:908px;top:636px;width:1px;height:4px;background:#b4b4b4"></div><div class="ab" style="left:915px;top:636px;width:1px;height:3px;background:#b4b4b4"></div><div class="ab" style="left:922px;top:636px;width:1px;height:3px;background:#b4b4b4"></div><div class="ab" style="left:930px;top:636px;width:1px;height:3px;background:#b4b4b4"></div><div class="ab" style="left:937px;top:636px;width:1px;height:3px;background:#b4b4b4"></div><div class="ab" style="left:944px;top:636px;width:1px;height:4px;background:#b4b4b4"></div><div class="ab" style="left:951px;top:636px;width:1px;height:3px;background:#b4b4b4"></div><div class="ab" style="left:958px;top:636px;width:1px;height:3px;background:#b4b4b4"></div><div class="ab" style="left:965px;top:636px;width:1px;height:3px;background:#b4b4b4"></div><div class="ab" style="left:972px;top:636px;width:1px;height:3px;background:#b4b4b4"></div><div class="ab" style="left:980px;top:636px;width:1px;height:4px;background:#b4b4b4"></div><div class="ab" style="left:987px;top:636px;width:1px;height:3px;background:#b4b4b4"></div><div class="ab" style="left:994px;top:636px;width:1px;height:3px;background:#b4b4b4"></div><div class="ab" style="left:1001px;top:636px;width:1px;height:3px;background:#b4b4b4"></div><div class="ab" style="left:1008px;top:636px;width:1px;height:3px;background:#b4b4b4"></div><div class="ab" style="left:1015px;top:636px;width:1px;height:4px;background:#b4b4b4"></div><div class="ab" style="left:1022px;top:636px;width:1px;height:3px;background:#b4b4b4"></div><div class="ab" style="left:1030px;top:636px;width:1px;height:3px;background:#b4b4b4"></div><div class="ab" style="left:1037px;top:636px;width:1px;height:3px;background:#b4b4b4"></div><div class="ab" style="left:1044px;top:636px;width:1px;height:3px;background:#b4b4b4"></div><div class="ab" style="left:1051px;top:636px;width:1px;height:4px;background:#b4b4b4"></div><div class="ab" style="left:1058px;top:636px;width:1px;height:3px;background:#b4b4b4"></div><div class="ab" style="left:1065px;top:636px;width:1px;height:3px;background:#b4b4b4"></div><div class="ab" style="left:1072px;top:636px;width:1px;height:3px;background:#b4b4b4"></div><div class="ab" style="left:1080px;top:636px;width:1px;height:3px;background:#b4b4b4"></div><div class="ab" style="left:1087px;top:636px;width:1px;height:4px;background:#b4b4b4"></div><div class="ab" style="left:1094px;top:636px;width:1px;height:3px;background:#b4b4b4"></div><div class="ab" style="left:1101px;top:636px;width:1px;height:3px;background:#b4b4b4"></div><div class="ab" style="left:1108px;top:636px;width:1px;height:3px;background:#b4b4b4"></div><div class="ab" style="left:1115px;top:636px;width:1px;height:3px;background:#b4b4b4"></div><div class="ab" style="left:1122px;top:636px;width:1px;height:4px;background:#b4b4b4"></div><div class="ab" style="left:1130px;top:636px;width:1px;height:3px;background:#b4b4b4"></div><div class="ab" style="left:1137px;top:636px;width:1px;height:3px;background:#b4b4b4"></div><div class="ab" style="left:1144px;top:636px;width:1px;height:3px;background:#b4b4b4"></div><div class="ab" style="left:1151px;top:636px;width:1px;height:3px;background:#b4b4b4"></div><div class="ab" style="left:1158px;top:636px;width:1px;height:4px;background:#b4b4b4"></div><div class="ab" style="left:1165px;top:636px;width:1px;height:3px;background:#b4b4b4"></div><div class="ab" style="left:1172px;top:636px;width:1px;height:3px;background:#b4b4b4"></div><div class="ab" style="left:1180px;top:636px;width:1px;height:3px;background:#b4b4b4"></div><div class="ab" style="left:1187px;top:636px;width:1px;height:3px;background:#b4b4b4"></div><div class="ab" style="left:1194px;top:636px;width:1px;height:4px;background:#b4b4b4"></div><div class="ab" style="left:1201px;top:636px;width:1px;height:3px;background:#b4b4b4"></div><div class="ab" style="left:1208px;top:636px;width:1px;height:3px;background:#b4b4b4"></div><div class="ab" style="left:1215px;top:636px;width:1px;height:3px;background:#b4b4b4"></div><div class="ab" style="left:1222px;top:636px;width:1px;height:3px;background:#b4b4b4"></div><div class="ab" style="left:1230px;top:636px;width:1px;height:4px;background:#b4b4b4"></div><div class="ab" style="left:1237px;top:636px;width:1px;height:3px;background:#b4b4b4"></div><div class="ab" style="left:1244px;top:636px;width:1px;height:3px;background:#b4b4b4"></div><div class="ab" style="left:1251px;top:636px;width:1px;height:3px;background:#b4b4b4"></div><div class="ab" style="left:1258px;top:636px;width:1px;height:3px;background:#b4b4b4"></div><div class="ab" style="left:1265px;top:636px;width:1px;height:4px;background:#b4b4b4"></div><div class="ab" style="left:1272px;top:636px;width:1px;height:3px;background:#b4b4b4"></div><div class="ab" style="left:1280px;top:636px;width:1px;height:3px;background:#b4b4b4"></div><div class="ab" style="left:1287px;top:636px;width:1px;height:3px;background:#b4b4b4"></div><div class="ab" style="left:1294px;top:636px;width:1px;height:3px;background:#b4b4b4"></div><div class="ab" style="left:1301px;top:636px;width:1px;height:4px;background:#b4b4b4"></div><div class="ab" style="left:1308px;top:636px;width:1px;height:3px;background:#b4b4b4"></div><div class="ab" style="left:1315px;top:636px;width:1px;height:3px;background:#b4b4b4"></div><div class="ab" style="left:1322px;top:636px;width:1px;height:3px;background:#b4b4b4"></div><div class="ab" style="left:1330px;top:636px;width:1px;height:3px;background:#b4b4b4"></div><div class="ab" style="left:1337px;top:636px;width:1px;height:4px;background:#b4b4b4"></div><div class="ab" style="left:1344px;top:636px;width:1px;height:3px;background:#b4b4b4"></div><div class="ab" style="left:1351px;top:636px;width:1px;height:3px;background:#b4b4b4"></div><div class="ab" style="left:1358px;top:636px;width:1px;height:3px;background:#b4b4b4"></div><div class="ab" style="left:1365px;top:636px;width:1px;height:3px;background:#b4b4b4"></div><div class="ab" style="left:1372px;top:636px;width:1px;height:4px;background:#b4b4b4"></div><div class="ab" style="left:1380px;top:636px;width:1px;height:3px;background:#b4b4b4"></div><div class="ab" style="left:1387px;top:636px;width:1px;height:3px;background:#b4b4b4"></div><div class="ab" style="left:1394px;top:636px;width:1px;height:3px;background:#b4b4b4"></div><div class="ab" style="left:1401px;top:636px;width:1px;height:3px;background:#b4b4b4"></div><div class="ab" style="left:1408px;top:636px;width:1px;height:4px;background:#b4b4b4"></div><div class="ab" style="left:1415px;top:636px;width:1px;height:3px;background:#b4b4b4"></div><div class="ab" style="left:1422px;top:636px;width:1px;height:3px;background:#b4b4b4"></div><div class="ab" style="left:1430px;top:636px;width:1px;height:3px;background:#b4b4b4"></div><div class="ab" style="left:1437px;top:636px;width:1px;height:3px;background:#b4b4b4"></div><div class="ab" style="left:1444px;top:636px;width:1px;height:4px;background:#b4b4b4"></div><div class="ab" style="left:1451px;top:636px;width:1px;height:3px;background:#b4b4b4"></div><div class="ab" style="left:1458px;top:636px;width:1px;height:3px;background:#b4b4b4"></div><div class="ab" style="left:1465px;top:636px;width:1px;height:3px;background:#b4b4b4"></div><div class="ab" style="left:1472px;top:636px;width:1px;height:3px;background:#b4b4b4"></div><div class="ab" style="left:1480px;top:636px;width:1px;height:4px;background:#b4b4b4"></div><div class="ab" style="left:1487px;top:636px;width:1px;height:3px;background:#b4b4b4"></div><div class="ab" style="left:1494px;top:636px;width:1px;height:3px;background:#b4b4b4"></div><div class="ab" style="left:1501px;top:636px;width:1px;height:3px;background:#b4b4b4"></div><div class="ab" style="left:1508px;top:636px;width:1px;height:3px;background:#b4b4b4"></div><div class="ab" style="left:1515px;top:636px;width:1px;height:4px;background:#b4b4b4"></div><div class="ab" style="left:1522px;top:636px;width:1px;height:3px;background:#b4b4b4"></div><div class="ab" style="left:1530px;top:636px;width:1px;height:3px;background:#b4b4b4"></div><div class="ab" style="left:1537px;top:636px;width:1px;height:3px;background:#b4b4b4"></div><div class="ab" style="left:1544px;top:636px;width:1px;height:3px;background:#b4b4b4"></div><div class="ab" style="left:1551px;top:636px;width:1px;height:4px;background:#b4b4b4"></div><div class="ab" style="left:1558px;top:636px;width:1px;height:3px;background:#b4b4b4"></div><div class="ab" style="left:1565px;top:636px;width:1px;height:3px;background:#b4b4b4"></div><div class="ab" style="left:1572px;top:636px;width:1px;height:3px;background:#b4b4b4"></div><div class="ab" style="left:1580px;top:636px;width:1px;height:3px;background:#b4b4b4"></div><div class="ab" style="left:1587px;top:636px;width:1px;height:4px;background:#b4b4b4"></div><div class="ab" style="left:1594px;top:636px;width:1px;height:3px;background:#b4b4b4"></div><div class="ab" style="left:1601px;top:636px;width:1px;height:3px;background:#b4b4b4"></div><div class="ab" style="left:1608px;top:636px;width:1px;height:3px;background:#b4b4b4"></div><div class="ab" style="left:1615px;top:636px;width:1px;height:3px;background:#b4b4b4"></div><div class="ab" style="left:1622px;top:636px;width:1px;height:4px;background:#b4b4b4"></div><div class="ab" style="left:1630px;top:636px;width:1px;height:3px;background:#b4b4b4"></div><div class="ab" style="left:1637px;top:636px;width:1px;height:3px;background:#b4b4b4"></div><div class="ab" style="left:1644px;top:636px;width:1px;height:3px;background:#b4b4b4"></div><div class="ab" style="left:1651px;top:636px;width:1px;height:3px;background:#b4b4b4"></div><div class="ab" style="left:1658px;top:636px;width:1px;height:4px;background:#b4b4b4"></div><div class="ab" style="left:1665px;top:636px;width:1px;height:3px;background:#b4b4b4"></div><div class="ab" style="left:1672px;top:636px;width:1px;height:3px;background:#b4b4b4"></div><div class="ab" style="left:1680px;top:636px;width:1px;height:3px;background:#b4b4b4"></div><div class="ab" style="left:1687px;top:636px;width:1px;height:3px;background:#b4b4b4"></div><div class="ab" style="left:1694px;top:636px;width:1px;height:4px;background:#b4b4b4"></div><div class="ab" style="left:1701px;top:636px;width:1px;height:3px;background:#b4b4b4"></div><div class="ab" style="left:1708px;top:636px;width:1px;height:3px;background:#b4b4b4"></div><div class="ab" style="left:1715px;top:636px;width:1px;height:3px;background:#b4b4b4"></div><div class="ab" style="left:1722px;top:636px;width:1px;height:3px;background:#b4b4b4"></div><div class="ab" style="left:1730px;top:636px;width:1px;height:4px;background:#b4b4b4"></div><div class="ab" style="left:1737px;top:636px;width:1px;height:3px;background:#b4b4b4"></div><div class="ab" style="left:1744px;top:636px;width:1px;height:3px;background:#b4b4b4"></div><div class="ab" style="left:1751px;top:636px;width:1px;height:3px;background:#b4b4b4"></div><div class="ab" style="left:1758px;top:636px;width:1px;height:3px;background:#b4b4b4"></div><div class="ab" style="left:1765px;top:636px;width:1px;height:4px;background:#b4b4b4"></div><div class="ab" style="left:1772px;top:636px;width:1px;height:3px;background:#b4b4b4"></div><div class="ab" style="left:1780px;top:636px;width:1px;height:3px;background:#b4b4b4"></div><div class="ab" style="left:1787px;top:636px;width:1px;height:3px;background:#b4b4b4"></div><div class="ab" style="left:1794px;top:636px;width:1px;height:3px;background:#b4b4b4"></div><div class="ab" style="left:1801px;top:636px;width:1px;height:4px;background:#b4b4b4"></div><div class="ab" style="left:1808px;top:636px;width:1px;height:3px;background:#b4b4b4"></div><div class="ab" style="left:1815px;top:636px;width:1px;height:3px;background:#b4b4b4"></div><div class="ab" style="left:1822px;top:636px;width:1px;height:3px;background:#b4b4b4"></div><div class="ab" style="left:1830px;top:636px;width:1px;height:3px;background:#b4b4b4"></div><div class="ab" style="left:1837px;top:636px;width:1px;height:4px;background:#b4b4b4"></div><div class="ab" style="left:1844px;top:636px;width:1px;height:3px;background:#b4b4b4"></div><div class="ab" style="left:1851px;top:636px;width:1px;height:3px;background:#b4b4b4"></div><div class="ab" style="left:1858px;top:636px;width:1px;height:3px;background:#b4b4b4"></div>
<div class="ab" style="left:281px;top:647px;width:1583px;height:10px;background:#000"></div>
<div class="t" style="left:307px;width:60px;text-align:center;top:645px;font-size:10px;color:#fff">14.950</div>
<div class="t" style="left:378px;width:60px;text-align:center;top:645px;font-size:10px;color:#fff">14.955</div>
<div class="t" style="left:450px;width:60px;text-align:center;top:645px;font-size:10px;color:#fff">14.960</div>
<div class="t" style="left:521px;width:60px;text-align:center;top:645px;font-size:10px;color:#fff">14.965</div>
<div class="t" style="left:593px;width:60px;text-align:center;top:645px;font-size:10px;color:#fff">14.970</div>
<div class="t" style="left:664px;width:60px;text-align:center;top:645px;font-size:10px;color:#fff">14.975</div>
<div class="t" style="left:736px;width:60px;text-align:center;top:645px;font-size:10px;color:#fff">14.980</div>
<div class="t" style="left:807px;width:60px;text-align:center;top:645px;font-size:10px;color:#fff">14.985</div>
<div class="t" style="left:878px;width:60px;text-align:center;top:645px;font-size:10px;color:#fff">14.990</div>
<div class="t" style="left:950px;width:60px;text-align:center;top:645px;font-size:10px;color:#fff">14.995</div>
<div class="t" style="left:1021px;width:60px;text-align:center;top:645px;font-size:10px;color:#fff">15.000</div>
<div class="t" style="left:1093px;width:60px;text-align:center;top:645px;font-size:10px;color:#fff">15.005</div>
<div class="t" style="left:1164px;width:60px;text-align:center;top:645px;font-size:10px;color:#fff">15.010</div>
<div class="t" style="left:1236px;width:60px;text-align:center;top:645px;font-size:10px;color:#fff">15.015</div>
<div class="t" style="left:1307px;width:60px;text-align:center;top:645px;font-size:10px;color:#fff">15.020</div>
<div class="t" style="left:1378px;width:60px;text-align:center;top:645px;font-size:10px;color:#fff">15.025</div>
<div class="t" style="left:1450px;width:60px;text-align:center;top:645px;font-size:10px;color:#fff">15.030</div>
<div class="t" style="left:1521px;width:60px;text-align:center;top:645px;font-size:10px;color:#fff">15.035</div>
<div class="t" style="left:1593px;width:60px;text-align:center;top:645px;font-size:10px;color:#fff">15.040</div>
<div class="t" style="left:1664px;width:60px;text-align:center;top:645px;font-size:10px;color:#fff">15.045</div>
<div class="t" style="left:1736px;width:60px;text-align:center;top:645px;font-size:10px;color:#fff">15.050</div>
<div class="t" style="left:1807px;width:60px;text-align:center;top:645px;font-size:10px;color:#fff">15.055</div>
<div class="ab" style="left:281px;top:657px;width:1583px;height:6px;background:#f4f4f4"></div>
<div class="ab" style="left:1041px;top:659px;width:63px;height:2px;background:repeating-linear-gradient(90deg,#707070 0 2px,transparent 2px 4px)"></div>
<svg class="ab" style="left:281px;top:663px" width="1583" height="357" viewBox="0 0 1583 357">
<defs>
<filter id="wfnoise" x="0" y="0" width="100%" height="100%" color-interpolation-filters="sRGB">
<feTurbulence type="fractalNoise" baseFrequency="0.6 0.06" numOctaves="2" seed="4" result="n"/>
<feColorMatrix type="matrix" values="0 0 0 0 0  0 0 0 0 0  0 0 0 0 0.12  0 0 0 2.0 -0.85"/>
</filter>
<linearGradient id="wfg" x1="0" y1="0" x2="0" y2="1">
<stop offset="0" stop-color="#02026e"/><stop offset="0.5" stop-color="#02026c"/><stop offset="0.59" stop-color="#040478"/><stop offset="0.605" stop-color="#030360"/><stop offset="0.635" stop-color="#000"/><stop offset="0.972" stop-color="#000"/><stop offset="0.978" stop-color="#030368"/><stop offset="1" stop-color="#040478"/>
</linearGradient>
<linearGradient id="wfm" x1="0" y1="0" x2="0" y2="1">
<stop offset="0" stop-color="#fff"/><stop offset="0.6" stop-color="#fff"/><stop offset="0.635" stop-color="#000"/><stop offset="0.972" stop-color="#000"/><stop offset="0.978" stop-color="#fff"/>
</linearGradient>
<mask id="wfmask"><rect width="1583" height="357" fill="url(#wfm)"/></mask>
</defs>
<rect width="1583" height="357" fill="url(#wfg)"/>
<rect width="1583" height="357" filter="url(#wfnoise)" mask="url(#wfmask)" opacity="0.6"/>
<path d="M1262 10 V40 M1262 80 V100 M1262 150 V230" stroke="#1a28b0" stroke-width="1.2" opacity="0.35"/>
<path d="M784 30 V60 M786 90 V110" stroke="#2a40d8" stroke-width="1" opacity="0.7"/>
<path d="M770.5 0 V349 M812.5 0 V349" stroke="#a0c0c0" stroke-width="1" stroke-dasharray="2 2" opacity="0.55"/>
</svg>
<div class="t" style="left:305px;top:963px;font-family:'Liberation Mono',monospace;font-size:38px;color:#fff;letter-spacing:-1px">18:42</div>
<div class="t" style="left:415px;top:974px;font-family:'Liberation Mono',monospace;font-size:22px;color:#fff">:05</div>
<div class="t" style="left:994px;top:962px;font-family:'Liberation Mono',monospace;font-size:13.7px;color:#fff">Freq: 15.001.45 MHz</div>
<div class="t" style="left:994px;top:985px;font-family:'Liberation Mono',monospace;font-size:13.7px;color:#fff;white-space:pre">Span:   ±55.385 kHz</div>
<div class="t" style="left:1721px;top:912.5px;font-family:'Liberation Mono',monospace;font-size:9.2px;color:#f4f4f4;white-space:pre">FFT Size ....: 1 m</div>
<div class="t" style="left:1721px;top:927.5px;font-family:'Liberation Mono',monospace;font-size:9.2px;color:#f4f4f4;white-space:pre">Overlap .....: 90 %</div>
<div class="t" style="left:1721px;top:942.5px;font-family:'Liberation Mono',monospace;font-size:9.2px;color:#f4f4f4;white-space:pre">Line rate ...: 10 /s</div>
<div class="t" style="left:1721px;top:957.5px;font-family:'Liberation Mono',monospace;font-size:9.2px;color:#f4f4f4;white-space:pre">Resolution ..: 1.0 Hz</div>
<div class="t" style="left:1721px;top:972.5px;font-family:'Liberation Mono',monospace;font-size:9.2px;color:#f4f4f4;white-space:pre">Windowing ...: Youssef</div>
<div class="t" style="left:1721px;top:987.5px;font-family:'Liberation Mono',monospace;font-size:9.2px;color:#f4f4f4;white-space:pre">Plan ........: CUDA</div>
<div class="ab" style="left:281px;top:1020px;width:1466px;height:28px;background:#000"></div>
<div class="ab" style="left:281px;top:1020px;width:1466px;height:1px;background:#b0b0b0"></div>
<div class="ab" style="left:307px;top:1021px;width:1440px;height:14px;background:linear-gradient(#4a4a4a,#2a2a2a)"></div>
<div class="ab" style="left:307px;top:1022px;width:1px;height:5px;background:#a0a0a0"></div><div class="ab" style="left:320px;top:1022px;width:1px;height:3px;background:#a0a0a0"></div><div class="ab" style="left:333px;top:1022px;width:1px;height:3px;background:#a0a0a0"></div><div class="ab" style="left:346px;top:1022px;width:1px;height:3px;background:#a0a0a0"></div><div class="ab" style="left:359px;top:1022px;width:1px;height:3px;background:#a0a0a0"></div><div class="ab" style="left:372px;top:1022px;width:1px;height:5px;background:#a0a0a0"></div><div class="ab" style="left:385px;top:1022px;width:1px;height:3px;background:#a0a0a0"></div><div class="ab" style="left:398px;top:1022px;width:1px;height:3px;background:#a0a0a0"></div><div class="ab" style="left:411px;top:1022px;width:1px;height:3px;background:#a0a0a0"></div><div class="ab" style="left:424px;top:1022px;width:1px;height:3px;background:#a0a0a0"></div><div class="ab" style="left:437px;top:1022px;width:1px;height:5px;background:#a0a0a0"></div><div class="ab" style="left:450px;top:1022px;width:1px;height:3px;background:#a0a0a0"></div><div class="ab" style="left:463px;top:1022px;width:1px;height:3px;background:#a0a0a0"></div><div class="ab" style="left:476px;top:1022px;width:1px;height:3px;background:#a0a0a0"></div><div class="ab" style="left:489px;top:1022px;width:1px;height:3px;background:#a0a0a0"></div><div class="ab" style="left:502px;top:1022px;width:1px;height:5px;background:#a0a0a0"></div><div class="ab" style="left:515px;top:1022px;width:1px;height:3px;background:#a0a0a0"></div><div class="ab" style="left:528px;top:1022px;width:1px;height:3px;background:#a0a0a0"></div><div class="ab" style="left:541px;top:1022px;width:1px;height:3px;background:#a0a0a0"></div><div class="ab" style="left:554px;top:1022px;width:1px;height:3px;background:#a0a0a0"></div><div class="ab" style="left:567px;top:1022px;width:1px;height:5px;background:#a0a0a0"></div><div class="ab" style="left:580px;top:1022px;width:1px;height:3px;background:#a0a0a0"></div><div class="ab" style="left:593px;top:1022px;width:1px;height:3px;background:#a0a0a0"></div><div class="ab" style="left:606px;top:1022px;width:1px;height:3px;background:#a0a0a0"></div><div class="ab" style="left:619px;top:1022px;width:1px;height:3px;background:#a0a0a0"></div><div class="ab" style="left:632px;top:1022px;width:1px;height:5px;background:#a0a0a0"></div><div class="ab" style="left:645px;top:1022px;width:1px;height:3px;background:#a0a0a0"></div><div class="ab" style="left:658px;top:1022px;width:1px;height:3px;background:#a0a0a0"></div><div class="ab" style="left:671px;top:1022px;width:1px;height:3px;background:#a0a0a0"></div><div class="ab" style="left:684px;top:1022px;width:1px;height:3px;background:#a0a0a0"></div><div class="ab" style="left:697px;top:1022px;width:1px;height:5px;background:#a0a0a0"></div><div class="ab" style="left:710px;top:1022px;width:1px;height:3px;background:#a0a0a0"></div><div class="ab" style="left:723px;top:1022px;width:1px;height:3px;background:#a0a0a0"></div><div class="ab" style="left:736px;top:1022px;width:1px;height:3px;background:#a0a0a0"></div><div class="ab" style="left:749px;top:1022px;width:1px;height:3px;background:#a0a0a0"></div><div class="ab" style="left:762px;top:1022px;width:1px;height:5px;background:#a0a0a0"></div><div class="ab" style="left:775px;top:1022px;width:1px;height:3px;background:#a0a0a0"></div><div class="ab" style="left:788px;top:1022px;width:1px;height:3px;background:#a0a0a0"></div><div class="ab" style="left:801px;top:1022px;width:1px;height:3px;background:#a0a0a0"></div><div class="ab" style="left:814px;top:1022px;width:1px;height:3px;background:#a0a0a0"></div><div class="ab" style="left:827px;top:1022px;width:1px;height:5px;background:#a0a0a0"></div><div class="ab" style="left:840px;top:1022px;width:1px;height:3px;background:#a0a0a0"></div><div class="ab" style="left:853px;top:1022px;width:1px;height:3px;background:#a0a0a0"></div><div class="ab" style="left:866px;top:1022px;width:1px;height:3px;background:#a0a0a0"></div><div class="ab" style="left:879px;top:1022px;width:1px;height:3px;background:#a0a0a0"></div><div class="ab" style="left:892px;top:1022px;width:1px;height:5px;background:#a0a0a0"></div><div class="ab" style="left:905px;top:1022px;width:1px;height:3px;background:#a0a0a0"></div><div class="ab" style="left:918px;top:1022px;width:1px;height:3px;background:#a0a0a0"></div><div class="ab" style="left:931px;top:1022px;width:1px;height:3px;background:#a0a0a0"></div><div class="ab" style="left:944px;top:1022px;width:1px;height:3px;background:#a0a0a0"></div><div class="ab" style="left:957px;top:1022px;width:1px;height:5px;background:#a0a0a0"></div><div class="ab" style="left:970px;top:1022px;width:1px;height:3px;background:#a0a0a0"></div><div class="ab" style="left:983px;top:1022px;width:1px;height:3px;background:#a0a0a0"></div><div class="ab" style="left:996px;top:1022px;width:1px;height:3px;background:#a0a0a0"></div><div class="ab" style="left:1009px;top:1022px;width:1px;height:3px;background:#a0a0a0"></div><div class="ab" style="left:1022px;top:1022px;width:1px;height:5px;background:#a0a0a0"></div><div class="ab" style="left:1035px;top:1022px;width:1px;height:3px;background:#a0a0a0"></div><div class="ab" style="left:1048px;top:1022px;width:1px;height:3px;background:#a0a0a0"></div><div class="ab" style="left:1061px;top:1022px;width:1px;height:3px;background:#a0a0a0"></div><div class="ab" style="left:1074px;top:1022px;width:1px;height:3px;background:#a0a0a0"></div><div class="ab" style="left:1087px;top:1022px;width:1px;height:5px;background:#a0a0a0"></div><div class="ab" style="left:1100px;top:1022px;width:1px;height:3px;background:#a0a0a0"></div><div class="ab" style="left:1113px;top:1022px;width:1px;height:3px;background:#a0a0a0"></div><div class="ab" style="left:1126px;top:1022px;width:1px;height:3px;background:#a0a0a0"></div><div class="ab" style="left:1139px;top:1022px;width:1px;height:3px;background:#a0a0a0"></div><div class="ab" style="left:1152px;top:1022px;width:1px;height:5px;background:#a0a0a0"></div><div class="ab" style="left:1165px;top:1022px;width:1px;height:3px;background:#a0a0a0"></div><div class="ab" style="left:1178px;top:1022px;width:1px;height:3px;background:#a0a0a0"></div><div class="ab" style="left:1191px;top:1022px;width:1px;height:3px;background:#a0a0a0"></div><div class="ab" style="left:1204px;top:1022px;width:1px;height:3px;background:#a0a0a0"></div><div class="ab" style="left:1217px;top:1022px;width:1px;height:5px;background:#a0a0a0"></div><div class="ab" style="left:1230px;top:1022px;width:1px;height:3px;background:#a0a0a0"></div><div class="ab" style="left:1243px;top:1022px;width:1px;height:3px;background:#a0a0a0"></div><div class="ab" style="left:1256px;top:1022px;width:1px;height:3px;background:#a0a0a0"></div><div class="ab" style="left:1269px;top:1022px;width:1px;height:3px;background:#a0a0a0"></div><div class="ab" style="left:1282px;top:1022px;width:1px;height:5px;background:#a0a0a0"></div><div class="ab" style="left:1295px;top:1022px;width:1px;height:3px;background:#a0a0a0"></div><div class="ab" style="left:1308px;top:1022px;width:1px;height:3px;background:#a0a0a0"></div><div class="ab" style="left:1321px;top:1022px;width:1px;height:3px;background:#a0a0a0"></div><div class="ab" style="left:1334px;top:1022px;width:1px;height:3px;background:#a0a0a0"></div><div class="ab" style="left:1347px;top:1022px;width:1px;height:5px;background:#a0a0a0"></div><div class="ab" style="left:1360px;top:1022px;width:1px;height:3px;background:#a0a0a0"></div><div class="ab" style="left:1373px;top:1022px;width:1px;height:3px;background:#a0a0a0"></div><div class="ab" style="left:1386px;top:1022px;width:1px;height:3px;background:#a0a0a0"></div><div class="ab" style="left:1399px;top:1022px;width:1px;height:3px;background:#a0a0a0"></div><div class="ab" style="left:1412px;top:1022px;width:1px;height:5px;background:#a0a0a0"></div><div class="ab" style="left:1425px;top:1022px;width:1px;height:3px;background:#a0a0a0"></div><div class="ab" style="left:1438px;top:1022px;width:1px;height:3px;background:#a0a0a0"></div><div class="ab" style="left:1451px;top:1022px;width:1px;height:3px;background:#a0a0a0"></div><div class="ab" style="left:1464px;top:1022px;width:1px;height:3px;background:#a0a0a0"></div><div class="ab" style="left:1477px;top:1022px;width:1px;height:5px;background:#a0a0a0"></div><div class="ab" style="left:1490px;top:1022px;width:1px;height:3px;background:#a0a0a0"></div><div class="ab" style="left:1503px;top:1022px;width:1px;height:3px;background:#a0a0a0"></div><div class="ab" style="left:1516px;top:1022px;width:1px;height:3px;background:#a0a0a0"></div><div class="ab" style="left:1529px;top:1022px;width:1px;height:3px;background:#a0a0a0"></div><div class="ab" style="left:1542px;top:1022px;width:1px;height:5px;background:#a0a0a0"></div><div class="ab" style="left:1555px;top:1022px;width:1px;height:3px;background:#a0a0a0"></div><div class="ab" style="left:1568px;top:1022px;width:1px;height:3px;background:#a0a0a0"></div><div class="ab" style="left:1581px;top:1022px;width:1px;height:3px;background:#a0a0a0"></div><div class="ab" style="left:1594px;top:1022px;width:1px;height:3px;background:#a0a0a0"></div><div class="ab" style="left:1607px;top:1022px;width:1px;height:5px;background:#a0a0a0"></div><div class="ab" style="left:1620px;top:1022px;width:1px;height:3px;background:#a0a0a0"></div><div class="ab" style="left:1633px;top:1022px;width:1px;height:3px;background:#a0a0a0"></div><div class="ab" style="left:1646px;top:1022px;width:1px;height:3px;background:#a0a0a0"></div><div class="ab" style="left:1659px;top:1022px;width:1px;height:3px;background:#a0a0a0"></div><div class="ab" style="left:1672px;top:1022px;width:1px;height:5px;background:#a0a0a0"></div><div class="ab" style="left:1685px;top:1022px;width:1px;height:3px;background:#a0a0a0"></div><div class="ab" style="left:1698px;top:1022px;width:1px;height:3px;background:#a0a0a0"></div><div class="ab" style="left:1711px;top:1022px;width:1px;height:3px;background:#a0a0a0"></div><div class="ab" style="left:1724px;top:1022px;width:1px;height:3px;background:#a0a0a0"></div><div class="ab" style="left:1737px;top:1022px;width:1px;height:5px;background:#a0a0a0"></div>
<div class="t" style="left:347px;width:60px;text-align:center;top:1031px;font-size:12px;color:#c8c8c8">12.500</div>
<div class="t" style="left:477px;width:60px;text-align:center;top:1031px;font-size:12px;color:#c8c8c8">13.000</div>
<div class="t" style="left:606px;width:60px;text-align:center;top:1031px;font-size:12px;color:#c8c8c8">13.500</div>
<div class="t" style="left:736px;width:60px;text-align:center;top:1031px;font-size:12px;color:#c8c8c8">14.000</div>
<div class="t" style="left:866px;width:60px;text-align:center;top:1031px;font-size:12px;color:#c8c8c8">14.500</div>
<div class="t" style="left:996px;width:60px;text-align:center;top:1031px;font-size:12px;color:#c8c8c8">15.000</div>
<div class="t" style="left:1125px;width:60px;text-align:center;top:1031px;font-size:12px;color:#c8c8c8">15.500</div>
<div class="t" style="left:1255px;width:60px;text-align:center;top:1031px;font-size:12px;color:#c8c8c8">16.000</div>
<div class="t" style="left:1385px;width:60px;text-align:center;top:1031px;font-size:12px;color:#c8c8c8">16.500</div>
<div class="t" style="left:1514px;width:60px;text-align:center;top:1031px;font-size:12px;color:#c8c8c8">17.000</div>
<div class="t" style="left:1644px;width:60px;text-align:center;top:1031px;font-size:12px;color:#c8c8c8">17.500</div>
<div class="ab" style="left:1012px;top:1020px;width:30px;height:27px;background:rgba(180,180,120,0.28);border:1px solid #c8c8c8"></div>
<div class="ab" style="left:1026px;top:1020px;width:2px;height:27px;background:#c8c020"></div>
<div class="ab" style="left:283px;top:1021px;width:25px;height:25px;background:#e4e4e4;border:1px solid #a8a8a8"></div>
<svg class="ab" style="left:286px;top:1024px" width="19" height="19" viewBox="0 0 19 19"><circle cx="9.5" cy="9.5" r="7" fill="none" stroke="#404040" stroke-width="1.5"/><path d="M9 6 L5.5 9.5 L9 13 Z M13 6 L9.5 9.5 L13 13 Z" fill="#303030"/></svg>
<div class="ab" style="left:1747px;top:1019px;width:117px;height:28px;background:#f0f0f0"></div>
<div class="ab" style="left:1747px;top:1021px;width:36px;height:25px;background:#e4e4e4;border:1px solid #c0c0c0"></div>
<svg class="ab" style="left:1756px;top:1026px" width="18" height="14" viewBox="0 0 18 14"><rect x="1" y="5" width="16" height="8" fill="none" stroke="#505050"/><path d="M3 8h12M3 10.5h12" stroke="#808080" stroke-width="0.8"/><path d="M9 5 V2 L12 1" stroke="#505050" fill="none"/></svg>
<div class="ab" style="left:1785px;top:1021px;width:49px;height:25px;background:#e4e4e4;border:1px solid #c0c0c0"></div>
<div class="t" style="left:1792px;top:1027px;font-size:12px;color:#000;">x50</div>
<div class="ab" style="left:1824px;top:1029px;width:0;height:0;border-top:4px solid transparent;border-bottom:4px solid transparent;border-left:5px solid #000"></div>
<div class="ab" style="left:1836px;top:1021px;width:26px;height:25px;background:#e4e4e4;border:1px solid #c0c0c0"></div>
<svg class="ab" style="left:1839px;top:1024px" width="19" height="19" viewBox="0 0 19 19"><circle cx="9.5" cy="9.5" r="7" fill="none" stroke="#404040" stroke-width="1.5"/><path d="M6 6 L9.5 9.5 L6 13 Z M10 6 L13.5 9.5 L10 13 Z" fill="#303030"/></svg>
<div class="ab" style="left:1864px;top:143px;width:40px;height:904px;background:#000"></div>
<div class="ab" style="left:1864px;top:144px;width:1px;height:875px;background:#d0d0d0"></div>
<div class="ab" style="left:1866px;top:146px;width:36px;height:28px;background:linear-gradient(#4a4a4a 0,#3a3a3a 40%,#000 40%);border-bottom:1px solid #404040"></div>
<div class="t" style="left:1872px;top:153px;font-size:12px;color:#e8e8e8;">Auto</div>
<div class="t" style="left:1860px;width:32px;text-align:right;top:223px;font-size:9px;color:#909090">-10</div>
<div class="t" style="left:1860px;width:32px;text-align:right;top:278px;font-size:9px;color:#909090">-20</div>
<div class="t" style="left:1860px;width:32px;text-align:right;top:332px;font-size:9px;color:#909090">-30</div>
<div class="t" style="left:1860px;width:32px;text-align:right;top:387px;font-size:9px;color:#909090">-40</div>
<div class="t" style="left:1860px;width:32px;text-align:right;top:441px;font-size:9px;color:#909090">-50</div>
<div class="t" style="left:1860px;width:32px;text-align:right;top:496px;font-size:9px;color:#909090">-60</div>
<div class="t" style="left:1860px;width:32px;text-align:right;top:551px;font-size:9px;color:#909090">-70</div>
<div class="t" style="left:1860px;width:32px;text-align:right;top:605px;font-size:9px;color:#909090">-80</div>
<div class="t" style="left:1860px;width:32px;text-align:right;top:660px;font-size:9px;color:#909090">-90</div>
<div class="t" style="left:1860px;width:32px;text-align:right;top:714px;font-size:9px;color:#909090">-100</div>
<div class="t" style="left:1860px;width:32px;text-align:right;top:769px;font-size:9px;color:#909090">-110</div>
<div class="t" style="left:1860px;width:32px;text-align:right;top:824px;font-size:9px;color:#909090">-120</div>
<div class="t" style="left:1860px;width:32px;text-align:right;top:878px;font-size:9px;color:#909090">-130</div>
<div class="t" style="left:1860px;width:32px;text-align:right;top:933px;font-size:9px;color:#909090">-140</div>
<div class="t" style="left:1860px;width:32px;text-align:right;top:987px;font-size:9px;color:#909090">-150</div>
<div class="t" style="left:1163px;top:1054px;font-size:10.5px;color:#202020;">Scheduler: Off</div>
<div class="t" style="left:1267px;top:1054px;font-size:10.5px;color:#202020;">CPU: 2.4%</div>
<div class="t" style="left:1416px;top:1054px;font-size:10.5px;color:#202020;">GPU: 5.2%</div>
<div class="t" style="left:1572px;top:1054px;font-size:10.5px;color:#202020;">Audio: 101ms</div>
<div class="t" style="left:1740px;top:1054px;font-size:10.5px;color:#202020;">Size: 2.2 GB</div>
<div class="ab" style="left:1332px;top:1054px;width:70px;height:12px;background:#e6e6e6;border:1px solid #bcbcbc"></div>
<div class="ab" style="left:1488px;top:1054px;width:70px;height:12px;background:#e6e6e6;border:1px solid #bcbcbc"></div>
<div class="ab" style="left:1490px;top:1056px;width:2px;height:8px;background:#06b025"></div>
<div class="ab" style="left:1655px;top:1054px;width:70px;height:12px;background:#e6e6e6;border:1px solid #bcbcbc"></div>
<div class="ab" style="left:1657px;top:1056px;width:58px;height:8px;background:#06b025"></div>
<div class="ab" style="left:1811px;top:1054px;width:70px;height:12px;background:#e6e6e6;border:1px solid #bcbcbc"></div>
<div class="ab" style="left:1813px;top:1056px;width:2px;height:8px;background:#06b025"></div>
<svg class="ab" style="left:1890px;top:1058px" width="12" height="12" viewBox="0 0 12 12"><g fill="#b8b8b8"><rect x="9" y="1" width="2" height="2"/><rect x="5" y="5" width="2" height="2"/><rect x="9" y="5" width="2" height="2"/><rect x="1" y="9" width="2" height="2"/><rect x="5" y="9" width="2" height="2"/><rect x="9" y="9" width="2" height="2"/></g></svg>
</body></html>
